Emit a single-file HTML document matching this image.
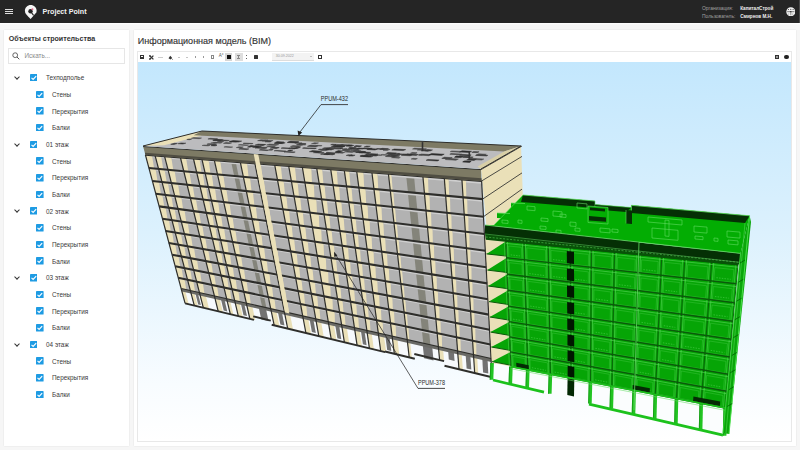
<!DOCTYPE html>
<html><head><meta charset="utf-8">
<style>
*{margin:0;padding:0;box-sizing:border-box}
html,body{width:800px;height:450px;overflow:hidden;background:#f6f6f6;font-family:"Liberation Sans",sans-serif;position:relative}
.hdr{position:absolute;left:0;top:0;width:800px;height:22.8px;background:#252525}
.card{position:absolute;background:#fff;box-shadow:0 0 1.2px rgba(0,0,0,0.13)}
.row{position:absolute;left:0;height:0}
.row .cb{position:absolute;top:-3.7px;width:7.6px;height:7.6px;line-height:0}
.row .lbl{position:absolute;top:-4.4px;font-size:6.4px;color:#3a3a3a;white-space:nowrap;line-height:9px}
.chev{position:absolute;left:14.6px;top:-2.6px;width:4px;height:4px;border-right:1.1px solid #333;border-bottom:1.1px solid #333;transform:rotate(45deg)}
.abs{position:absolute;white-space:nowrap;line-height:1}
</style></head><body>
<div class="abs" style="left:0;top:22.8px;width:800px;height:2px;background:linear-gradient(#fff,#f6f6f6)"></div>
<div class="hdr">
  <div class="abs" style="left:5px;top:8.5px;width:8px;height:1.2px;background:#ddd"></div>
  <div class="abs" style="left:5px;top:10.9px;width:8px;height:1.2px;background:#ddd"></div>
  <div class="abs" style="left:5px;top:13.3px;width:8px;height:1.2px;background:#ddd"></div>
  <svg class="abs" style="left:22px;top:3.2px" width="18" height="18" viewBox="0 0 18 18">
    <path d="M8.7 2.1 C5.5 2.1 2.9 4.6 2.9 7.8 C2.9 10.1 4.3 11.6 5.9 13.3 L8.6 15.9 L14.3 9.6 C14.5 9 14.6 8.4 14.6 7.8 C14.6 4.6 12 2.1 8.7 2.1Z" fill="#f6f6f6"/>
    <circle cx="8.5" cy="8.2" r="2.2" fill="#242424"/>
    <path d="M8.7 8.6 L11.6 12.4" stroke="#242424" stroke-width="1.1"/>
    <circle cx="10.4" cy="6.3" r="1" fill="#e0557a" opacity="0.85"/>
  </svg>
  <div class="abs" style="left:42.5px;top:8.5px;font-size:7.15px;font-weight:bold;color:#f2f2f2">Project Point</div>
  <div class="abs" style="left:702px;top:7.4px;font-size:4.95px;color:#a0a0a0">Организация:</div>
  <div class="abs" style="left:702px;top:14.6px;font-size:4.95px;color:#a0a0a0">Пользователь:</div>
  <div class="abs" style="left:740.2px;top:7.3px;font-size:4.65px;font-weight:bold;color:#f0f0f0">КапиталСтрой</div>
  <div class="abs" style="left:740.2px;top:14.5px;font-size:4.65px;font-weight:bold;color:#f0f0f0">Смирнов М.Н.</div>
  <svg class="abs" style="left:785.8px;top:6.8px" width="9.6" height="9.6" viewBox="0 0 10 10">
    <circle cx="5" cy="5" r="4.7" fill="#f2f2f2"/>
    <circle cx="2.6" cy="2.6" r="0.55" fill="#333"/><circle cx="5" cy="2.4" r="0.6" fill="#333"/><circle cx="7.4" cy="2.6" r="0.55" fill="#333"/>
    <path d="M1.2 4.9H8.8" stroke="#444" stroke-width="0.7"/><circle cx="5" cy="4.9" r="0.7" fill="#222"/>
    <path d="M5 5.5V8.6" stroke="#555" stroke-width="0.7"/>
    <circle cx="2.9" cy="7.2" r="0.5" fill="#555"/><circle cx="7.1" cy="7.2" r="0.5" fill="#555"/>
  </svg>
  <div class="abs" style="left:798.8px;top:0;width:1.2px;height:22.8px;background:#4a4a4a"></div>
</div>
<div class="card" style="left:4px;top:30px;width:125px;height:415.5px"></div>
<div class="abs" style="left:8.75px;top:36px;font-size:7.1px;font-weight:bold;color:#333">Объекты строительства</div>
<div class="abs" style="left:8.3px;top:48px;width:116.4px;height:16.4px;border:1px solid #e6e6e6;background:#fff"></div>
<svg class="abs" style="left:12.4px;top:52px" width="8" height="8" viewBox="0 0 8 8"><circle cx="3.2" cy="3.2" r="2.4" fill="none" stroke="#555" stroke-width="0.9"/><path d="M5 5 L7.3 7.3" stroke="#555" stroke-width="1"/></svg>
<div class="abs" style="left:24.5px;top:53.3px;font-size:6.35px;color:#8a8a8a">Искать...</div>
<div class="row" style="top:77.5px"><span class="chev"></span><span class="cb" style="left:29.5px"><svg width="7.6" height="7.6" viewBox="0 0 8 8"><rect width="8" height="8" rx="0.7" fill="#1e9be3"/><path d="M1.6 4.1 L3.3 5.7 L6.5 2.3" stroke="#fff" stroke-width="1.25" fill="none"/></svg></span><span class="lbl" style="left:46px">Техподполье</span></div>
<div class="row" style="top:94.2px"><span class="cb" style="left:36px"><svg width="7.6" height="7.6" viewBox="0 0 8 8"><rect width="8" height="8" rx="0.7" fill="#1e9be3"/><path d="M1.6 4.1 L3.3 5.7 L6.5 2.3" stroke="#fff" stroke-width="1.25" fill="none"/></svg></span><span class="lbl" style="left:52px">Стены</span></div>
<div class="row" style="top:110.9px"><span class="cb" style="left:36px"><svg width="7.6" height="7.6" viewBox="0 0 8 8"><rect width="8" height="8" rx="0.7" fill="#1e9be3"/><path d="M1.6 4.1 L3.3 5.7 L6.5 2.3" stroke="#fff" stroke-width="1.25" fill="none"/></svg></span><span class="lbl" style="left:52px">Перекрытия</span></div>
<div class="row" style="top:127.5px"><span class="cb" style="left:36px"><svg width="7.6" height="7.6" viewBox="0 0 8 8"><rect width="8" height="8" rx="0.7" fill="#1e9be3"/><path d="M1.6 4.1 L3.3 5.7 L6.5 2.3" stroke="#fff" stroke-width="1.25" fill="none"/></svg></span><span class="lbl" style="left:52px">Балки</span></div>
<div class="row" style="top:144.2px"><span class="chev"></span><span class="cb" style="left:29.5px"><svg width="7.6" height="7.6" viewBox="0 0 8 8"><rect width="8" height="8" rx="0.7" fill="#1e9be3"/><path d="M1.6 4.1 L3.3 5.7 L6.5 2.3" stroke="#fff" stroke-width="1.25" fill="none"/></svg></span><span class="lbl" style="left:46px">01 этаж</span></div>
<div class="row" style="top:160.9px"><span class="cb" style="left:36px"><svg width="7.6" height="7.6" viewBox="0 0 8 8"><rect width="8" height="8" rx="0.7" fill="#1e9be3"/><path d="M1.6 4.1 L3.3 5.7 L6.5 2.3" stroke="#fff" stroke-width="1.25" fill="none"/></svg></span><span class="lbl" style="left:52px">Стены</span></div>
<div class="row" style="top:177.6px"><span class="cb" style="left:36px"><svg width="7.6" height="7.6" viewBox="0 0 8 8"><rect width="8" height="8" rx="0.7" fill="#1e9be3"/><path d="M1.6 4.1 L3.3 5.7 L6.5 2.3" stroke="#fff" stroke-width="1.25" fill="none"/></svg></span><span class="lbl" style="left:52px">Перекрытия</span></div>
<div class="row" style="top:194.3px"><span class="cb" style="left:36px"><svg width="7.6" height="7.6" viewBox="0 0 8 8"><rect width="8" height="8" rx="0.7" fill="#1e9be3"/><path d="M1.6 4.1 L3.3 5.7 L6.5 2.3" stroke="#fff" stroke-width="1.25" fill="none"/></svg></span><span class="lbl" style="left:52px">Балки</span></div>
<div class="row" style="top:210.9px"><span class="chev"></span><span class="cb" style="left:29.5px"><svg width="7.6" height="7.6" viewBox="0 0 8 8"><rect width="8" height="8" rx="0.7" fill="#1e9be3"/><path d="M1.6 4.1 L3.3 5.7 L6.5 2.3" stroke="#fff" stroke-width="1.25" fill="none"/></svg></span><span class="lbl" style="left:46px">02 этаж</span></div>
<div class="row" style="top:227.6px"><span class="cb" style="left:36px"><svg width="7.6" height="7.6" viewBox="0 0 8 8"><rect width="8" height="8" rx="0.7" fill="#1e9be3"/><path d="M1.6 4.1 L3.3 5.7 L6.5 2.3" stroke="#fff" stroke-width="1.25" fill="none"/></svg></span><span class="lbl" style="left:52px">Стены</span></div>
<div class="row" style="top:244.3px"><span class="cb" style="left:36px"><svg width="7.6" height="7.6" viewBox="0 0 8 8"><rect width="8" height="8" rx="0.7" fill="#1e9be3"/><path d="M1.6 4.1 L3.3 5.7 L6.5 2.3" stroke="#fff" stroke-width="1.25" fill="none"/></svg></span><span class="lbl" style="left:52px">Перекрытия</span></div>
<div class="row" style="top:261.0px"><span class="cb" style="left:36px"><svg width="7.6" height="7.6" viewBox="0 0 8 8"><rect width="8" height="8" rx="0.7" fill="#1e9be3"/><path d="M1.6 4.1 L3.3 5.7 L6.5 2.3" stroke="#fff" stroke-width="1.25" fill="none"/></svg></span><span class="lbl" style="left:52px">Балки</span></div>
<div class="row" style="top:277.7px"><span class="chev"></span><span class="cb" style="left:29.5px"><svg width="7.6" height="7.6" viewBox="0 0 8 8"><rect width="8" height="8" rx="0.7" fill="#1e9be3"/><path d="M1.6 4.1 L3.3 5.7 L6.5 2.3" stroke="#fff" stroke-width="1.25" fill="none"/></svg></span><span class="lbl" style="left:46px">03 этаж</span></div>
<div class="row" style="top:294.3px"><span class="cb" style="left:36px"><svg width="7.6" height="7.6" viewBox="0 0 8 8"><rect width="8" height="8" rx="0.7" fill="#1e9be3"/><path d="M1.6 4.1 L3.3 5.7 L6.5 2.3" stroke="#fff" stroke-width="1.25" fill="none"/></svg></span><span class="lbl" style="left:52px">Стены</span></div>
<div class="row" style="top:311.0px"><span class="cb" style="left:36px"><svg width="7.6" height="7.6" viewBox="0 0 8 8"><rect width="8" height="8" rx="0.7" fill="#1e9be3"/><path d="M1.6 4.1 L3.3 5.7 L6.5 2.3" stroke="#fff" stroke-width="1.25" fill="none"/></svg></span><span class="lbl" style="left:52px">Перекрытия</span></div>
<div class="row" style="top:327.7px"><span class="cb" style="left:36px"><svg width="7.6" height="7.6" viewBox="0 0 8 8"><rect width="8" height="8" rx="0.7" fill="#1e9be3"/><path d="M1.6 4.1 L3.3 5.7 L6.5 2.3" stroke="#fff" stroke-width="1.25" fill="none"/></svg></span><span class="lbl" style="left:52px">Балки</span></div>
<div class="row" style="top:344.4px"><span class="chev"></span><span class="cb" style="left:29.5px"><svg width="7.6" height="7.6" viewBox="0 0 8 8"><rect width="8" height="8" rx="0.7" fill="#1e9be3"/><path d="M1.6 4.1 L3.3 5.7 L6.5 2.3" stroke="#fff" stroke-width="1.25" fill="none"/></svg></span><span class="lbl" style="left:46px">04 этаж</span></div>
<div class="row" style="top:361.1px"><span class="cb" style="left:36px"><svg width="7.6" height="7.6" viewBox="0 0 8 8"><rect width="8" height="8" rx="0.7" fill="#1e9be3"/><path d="M1.6 4.1 L3.3 5.7 L6.5 2.3" stroke="#fff" stroke-width="1.25" fill="none"/></svg></span><span class="lbl" style="left:52px">Стены</span></div>
<div class="row" style="top:377.7px"><span class="cb" style="left:36px"><svg width="7.6" height="7.6" viewBox="0 0 8 8"><rect width="8" height="8" rx="0.7" fill="#1e9be3"/><path d="M1.6 4.1 L3.3 5.7 L6.5 2.3" stroke="#fff" stroke-width="1.25" fill="none"/></svg></span><span class="lbl" style="left:52px">Перекрытия</span></div>
<div class="row" style="top:394.4px"><span class="cb" style="left:36px"><svg width="7.6" height="7.6" viewBox="0 0 8 8"><rect width="8" height="8" rx="0.7" fill="#1e9be3"/><path d="M1.6 4.1 L3.3 5.7 L6.5 2.3" stroke="#fff" stroke-width="1.25" fill="none"/></svg></span><span class="lbl" style="left:52px">Балки</span></div>
<div class="card" style="left:133.5px;top:30px;width:662px;height:415.5px"></div>
<div class="abs" style="left:137.8px;top:37.2px;font-size:9.02px;color:#333;-webkit-text-stroke:0.15px #333">Информационная модель (BIM)</div>
<div class="abs" style="left:137px;top:51px;width:654.5px;height:390.5px;border:1px solid #e8e8e8;background:#fff"></div>

<div class="abs" style="left:139.5px;top:55px;width:4.8px;height:3.8px;background:#333"></div>
<div class="abs" style="left:140.6px;top:56.3px;width:2.6px;height:1.1px;background:#fff"></div>
<svg class="abs" style="left:148.8px;top:54.6px" width="5" height="5" viewBox="0 0 5 5"><path d="M0.6 0.6L4.4 4.4M4.4 0.6L0.6 4.4" stroke="#333" stroke-width="1.3"/><circle cx="0.9" cy="0.9" r="0.8" fill="#333"/><circle cx="0.9" cy="4.1" r="0.8" fill="#333"/></svg>
<div class="abs" style="left:158.2px;top:56.6px;width:4.5px;height:0.8px;background:#ccc"></div>
<svg class="abs" style="left:167.8px;top:54.5px" width="5" height="5" viewBox="0 0 5 5"><path d="M0.5 3.2L2.3 0.8L4.2 3L2.6 4.6Z" fill="#333"/><path d="M4 3.8L4.8 4.8" stroke="#333" stroke-width="0.6"/></svg>
<div class="abs" style="left:177.5px;top:56.5px;width:2.5px;height:0.8px;background:#c4c4c4"></div>
<div class="abs" style="left:185.5px;top:56.5px;width:2.5px;height:0.8px;background:#c4c4c4"></div>
<div class="abs" style="left:194.5px;top:55.5px;width:1.2px;height:2.5px;background:#999"></div>
<div class="abs" style="left:202.8px;top:55.5px;width:1.2px;height:2.5px;background:#999"></div>
<div class="abs" style="left:211.4px;top:55px;width:3px;height:3.8px;border:0.7px dashed #888"></div>
<div class="abs" style="left:218.8px;top:53.5px;font-size:4.5px;color:#555">A°</div>
<div class="abs" style="left:225.2px;top:53px;width:6.8px;height:7.8px;background:#d6d6d6"></div>
<div class="abs" style="left:227px;top:55px;width:4px;height:4px;background:#111"></div>
<div class="abs" style="left:235px;top:53px;width:7.9px;height:7.8px;background:#dedede"></div>
<div class="abs" style="left:238.2px;top:55px;width:1px;height:4px;background:#888"></div>
<div class="abs" style="left:237.3px;top:55px;width:2.8px;height:0.7px;background:#888"></div>
<div class="abs" style="left:237.3px;top:58.3px;width:2.8px;height:0.7px;background:#888"></div>
<div class="abs" style="left:246px;top:54.5px;width:1.3px;height:1.3px;background:#666"></div>
<div class="abs" style="left:246px;top:57.8px;width:1.3px;height:1.3px;background:#666"></div>
<div class="abs" style="left:254px;top:55px;width:4.2px;height:3.8px;background:#333;border-radius:0.6px"></div>
<div class="abs" style="left:272.2px;top:52.5px;width:41.6px;height:8.7px;background:#f3f3f3;border-bottom:0.6px solid #ddd"></div>
<div class="abs" style="left:275.7px;top:54.8px;font-size:3.6px;color:#999">30.09.2022</div>
<div class="abs" style="left:310.4px;top:55.8px;width:0;height:0;border-left:1.2px solid transparent;border-right:1.2px solid transparent;border-top:1.4px solid #888"></div>
<div class="abs" style="left:317.8px;top:54.8px;width:4.2px;height:4.2px;border:0.9px solid #333;border-top-width:1.3px"></div>
<div class="abs" style="left:775px;top:55px;width:4px;height:4px;background:#333"></div>
<div class="abs" style="left:776.2px;top:56.2px;width:1.6px;height:1.6px;background:#999"></div>
<div class="abs" style="left:784px;top:54.8px;width:4.5px;height:4.5px;background:#222;border-radius:50%"></div>

<div class="abs" style="left:138px;top:62px;width:652.5px;height:378.5px;background:linear-gradient(180deg,#c3e7fd 0%,#dcf1fd 45%,#f8fcff 85%,#ffffff 100%)"></div>
<svg class="abs" style="left:138px;top:62px" width="652.5" height="378.5" viewBox="138 62 652.5 378.5">
<polygon points="481.0,169.0 521.0,146.0 523.0,200.0 487.0,232.0" fill="#eae0b8"/>
<line x1="481.0" y1="169.6" x2="522.0" y2="146.0" stroke="#4a4a44" stroke-width="1.00"/>
<line x1="481.6" y1="181.0" x2="522.0" y2="156.4" stroke="#4a4a44" stroke-width="1.00"/>
<line x1="482.6" y1="199.1" x2="522.0" y2="172.9" stroke="#4a4a44" stroke-width="1.00"/>
<line x1="483.5" y1="216.7" x2="522.0" y2="189.1" stroke="#4a4a44" stroke-width="1.00"/>
<line x1="484.4" y1="234.0" x2="522.0" y2="205.0" stroke="#4a4a44" stroke-width="1.00"/>
<polygon points="484.4,234.0 490.0,237.0 497.0,380.0 492.0,377.2" fill="#eae0b8"/>
<polygon points="145.4,154.8 481.6,181.0 491.0,358.9 181.3,289.0" fill="#b2b2b2"/>
<polygon points="145.4,154.8 152.0,155.3 154.1,168.5 148.9,168.0" fill="#eae0b8"/>
<polygon points="152.0,155.3 155.1,155.6 155.6,157.6 152.5,157.3" fill="#cfcfcf"/>
<polygon points="148.9,168.0 155.5,168.6 157.6,181.6 152.4,181.0" fill="#eae0b8"/>
<polygon points="155.5,168.6 158.6,168.9 159.1,170.9 156.0,170.6" fill="#cfcfcf"/>
<polygon points="152.4,181.0 158.9,181.8 161.0,194.5 155.8,193.8" fill="#eae0b8"/>
<polygon points="158.9,181.8 162.0,182.1 162.5,184.0 159.4,183.7" fill="#cfcfcf"/>
<polygon points="155.8,193.8 162.3,194.6 164.3,207.1 159.2,206.4" fill="#eae0b8"/>
<polygon points="162.3,194.6 165.4,195.0 165.9,196.9 162.8,196.6" fill="#cfcfcf"/>
<polygon points="159.2,206.4 165.6,207.3 167.6,219.6 162.5,218.8" fill="#eae0b8"/>
<polygon points="165.6,207.3 168.7,207.7 169.2,209.6 166.1,209.2" fill="#cfcfcf"/>
<polygon points="162.5,218.8 168.9,219.8 170.9,231.8 165.7,231.0" fill="#eae0b8"/>
<polygon points="168.9,219.8 172.0,220.2 172.5,222.1 169.4,221.6" fill="#cfcfcf"/>
<polygon points="165.7,231.0 172.2,232.0 174.0,243.9 168.9,243.0" fill="#eae0b8"/>
<polygon points="172.2,232.0 175.2,232.5 175.7,234.4 172.6,233.8" fill="#cfcfcf"/>
<polygon points="168.9,243.0 175.3,244.1 177.2,255.7 172.1,254.7" fill="#eae0b8"/>
<polygon points="175.3,244.1 178.4,244.6 178.8,246.4 175.8,245.9" fill="#cfcfcf"/>
<polygon points="172.1,254.7 178.5,255.9 180.3,267.4 175.2,266.3" fill="#eae0b8"/>
<polygon points="178.5,255.9 181.5,256.5 181.9,258.3 178.9,257.7" fill="#cfcfcf"/>
<polygon points="175.2,266.3 181.5,267.6 183.3,278.8 178.2,277.8" fill="#eae0b8"/>
<polygon points="181.5,267.6 184.5,268.2 185.0,270.0 182.0,269.4" fill="#cfcfcf"/>
<polygon points="178.2,277.8 184.6,279.1 186.3,290.1 181.3,289.0" fill="#eae0b8"/>
<polygon points="184.6,279.1 187.6,279.8 188.0,281.5 185.0,280.8" fill="#cfcfcf"/>
<polygon points="155.1,155.6 161.1,156.0 163.3,169.4 158.6,168.9" fill="#eae0b8"/>
<polygon points="161.1,156.0 164.6,156.3 165.1,158.3 161.6,158.1" fill="#cfcfcf"/>
<polygon points="158.6,168.9 164.5,169.5 166.8,182.6 162.0,182.1" fill="#eae0b8"/>
<polygon points="164.5,169.5 168.1,169.8 168.6,171.8 165.1,171.5" fill="#cfcfcf"/>
<polygon points="162.0,182.1 167.9,182.7 170.1,195.6 165.4,195.0" fill="#eae0b8"/>
<polygon points="167.9,182.7 171.5,183.1 172.0,185.1 168.5,184.7" fill="#cfcfcf"/>
<polygon points="165.4,195.0 171.3,195.7 173.4,208.4 168.7,207.7" fill="#eae0b8"/>
<polygon points="171.3,195.7 174.8,196.2 175.3,198.1 171.8,197.7" fill="#cfcfcf"/>
<polygon points="168.7,207.7 174.6,208.5 176.7,220.9 172.0,220.2" fill="#eae0b8"/>
<polygon points="174.6,208.5 178.1,209.0 178.6,210.9 175.1,210.4" fill="#cfcfcf"/>
<polygon points="172.0,220.2 177.8,221.1 179.9,233.3 175.2,232.5" fill="#eae0b8"/>
<polygon points="177.8,221.1 181.3,221.6 181.8,223.5 178.3,223.0" fill="#cfcfcf"/>
<polygon points="175.2,232.5 181.0,233.5 183.0,245.4 178.4,244.6" fill="#eae0b8"/>
<polygon points="181.0,233.5 184.5,234.0 184.9,235.9 181.5,235.3" fill="#cfcfcf"/>
<polygon points="178.4,244.6 184.2,245.6 186.1,257.4 181.5,256.5" fill="#eae0b8"/>
<polygon points="184.2,245.6 187.6,246.2 188.1,248.1 184.6,247.4" fill="#cfcfcf"/>
<polygon points="181.5,256.5 187.2,257.6 189.1,269.2 184.5,268.2" fill="#eae0b8"/>
<polygon points="187.2,257.6 190.7,258.3 191.1,260.0 187.7,259.4" fill="#cfcfcf"/>
<polygon points="184.5,268.2 190.3,269.4 192.1,280.7 187.6,279.8" fill="#eae0b8"/>
<polygon points="190.3,269.4 193.7,270.1 194.1,271.8 190.7,271.1" fill="#cfcfcf"/>
<polygon points="187.6,279.8 193.3,281.0 195.1,292.1 190.5,291.1" fill="#eae0b8"/>
<polygon points="193.3,281.0 196.6,281.7 197.1,283.4 193.7,282.7" fill="#cfcfcf"/>
<polygon points="164.6,156.3 171.2,156.8 173.3,170.3 168.1,169.8" fill="#eae0b8"/>
<polygon points="171.2,156.8 180.4,157.5 181.0,159.6 171.7,158.9" fill="#cfcfcf"/>
<polygon points="168.1,169.8 174.6,170.4 176.7,183.7 171.5,183.1" fill="#eae0b8"/>
<polygon points="174.6,170.4 183.8,171.3 184.3,173.3 175.1,172.4" fill="#cfcfcf"/>
<polygon points="171.5,183.1 178.0,183.8 180.0,196.8 174.8,196.2" fill="#eae0b8"/>
<polygon points="178.0,183.8 187.1,184.8 187.6,186.8 178.5,185.8" fill="#cfcfcf"/>
<polygon points="174.8,196.2 181.3,197.0 183.2,209.7 178.1,209.0" fill="#eae0b8"/>
<polygon points="181.3,197.0 190.4,198.1 190.9,200.0 181.8,198.9" fill="#cfcfcf"/>
<polygon points="178.1,209.0 184.5,209.9 186.4,222.4 181.3,221.6" fill="#eae0b8"/>
<polygon points="184.5,209.9 193.6,211.1 194.1,213.1 185.0,211.8" fill="#cfcfcf"/>
<polygon points="181.3,221.6 187.7,222.6 189.6,234.9 184.5,234.0" fill="#eae0b8"/>
<polygon points="187.7,222.6 196.7,223.9 197.2,225.8 188.2,224.5" fill="#cfcfcf"/>
<polygon points="184.5,234.0 190.9,235.1 192.7,247.1 187.6,246.2" fill="#eae0b8"/>
<polygon points="190.9,235.1 199.8,236.5 200.3,238.4 191.3,236.9" fill="#cfcfcf"/>
<polygon points="187.6,246.2 194.0,247.4 195.7,259.2 190.7,258.3" fill="#eae0b8"/>
<polygon points="194.0,247.4 202.9,248.9 203.3,250.8 194.4,249.2" fill="#cfcfcf"/>
<polygon points="190.7,258.3 197.0,259.5 198.7,271.1 193.7,270.1" fill="#eae0b8"/>
<polygon points="197.0,259.5 205.9,261.1 206.3,262.9 197.4,261.2" fill="#cfcfcf"/>
<polygon points="193.7,270.1 200.0,271.3 201.7,282.8 196.6,281.7" fill="#eae0b8"/>
<polygon points="200.0,271.3 208.8,273.1 209.2,274.9 200.4,273.1" fill="#cfcfcf"/>
<polygon points="196.6,281.7 202.9,283.0 204.5,294.3 199.6,293.1" fill="#eae0b8"/>
<polygon points="202.9,283.0 211.7,284.9 212.1,286.7 203.3,284.8" fill="#cfcfcf"/>
<polygon points="180.4,157.5 186.1,158.0 188.3,171.7 183.8,171.3" fill="#eae0b8"/>
<polygon points="186.1,158.0 193.4,158.5 193.9,160.6 186.6,160.1" fill="#cfcfcf"/>
<polygon points="183.8,171.3 189.4,171.8 191.6,185.3 187.1,184.8" fill="#eae0b8"/>
<polygon points="189.4,171.8 196.7,172.5 197.2,174.5 189.9,173.9" fill="#cfcfcf"/>
<polygon points="187.1,184.8 192.7,185.4 194.8,198.6 190.4,198.1" fill="#eae0b8"/>
<polygon points="192.7,185.4 199.9,186.2 200.4,188.2 193.2,187.4" fill="#cfcfcf"/>
<polygon points="190.4,198.1 195.9,198.7 198.0,211.7 193.6,211.1" fill="#eae0b8"/>
<polygon points="195.9,198.7 203.1,199.6 203.6,201.6 196.4,200.7" fill="#cfcfcf"/>
<polygon points="193.6,211.1 199.1,211.9 201.1,224.6 196.7,223.9" fill="#eae0b8"/>
<polygon points="199.1,211.9 206.2,212.8 206.7,214.8 199.6,213.8" fill="#cfcfcf"/>
<polygon points="196.7,223.9 202.2,224.8 204.2,237.3 199.8,236.5" fill="#eae0b8"/>
<polygon points="202.2,224.8 209.3,225.8 209.8,227.8 202.7,226.7" fill="#cfcfcf"/>
<polygon points="199.8,236.5 205.3,237.4 207.2,249.7 202.9,248.9" fill="#eae0b8"/>
<polygon points="205.3,237.4 212.4,238.6 212.8,240.5 205.8,239.3" fill="#cfcfcf"/>
<polygon points="202.9,248.9 208.3,249.9 210.2,261.9 205.9,261.1" fill="#eae0b8"/>
<polygon points="208.3,249.9 215.3,251.1 215.8,253.0 208.8,251.8" fill="#cfcfcf"/>
<polygon points="205.9,261.1 211.3,262.2 213.1,274.0 208.8,273.1" fill="#eae0b8"/>
<polygon points="211.3,262.2 218.3,263.5 218.7,265.3 211.7,264.0" fill="#cfcfcf"/>
<polygon points="208.8,273.1 214.2,274.2 216.0,285.8 211.7,284.9" fill="#eae0b8"/>
<polygon points="214.2,274.2 221.1,275.6 221.6,277.4 214.6,276.0" fill="#cfcfcf"/>
<polygon points="211.7,284.9 217.1,286.1 218.8,297.5 214.6,296.5" fill="#eae0b8"/>
<polygon points="217.1,286.1 224.0,287.5 224.4,289.3 217.5,287.8" fill="#cfcfcf"/>
<polygon points="193.4,158.5 199.6,159.0 201.6,172.9 196.7,172.5" fill="#eae0b8"/>
<polygon points="199.6,159.0 201.9,159.2 202.4,161.3 200.1,161.1" fill="#cfcfcf"/>
<polygon points="196.7,172.5 202.8,173.1 204.8,186.7 199.9,186.2" fill="#eae0b8"/>
<polygon points="202.8,173.1 205.2,173.3 205.6,175.4 203.3,175.1" fill="#cfcfcf"/>
<polygon points="199.9,186.2 206.1,186.8 208.0,200.2 203.1,199.6" fill="#eae0b8"/>
<polygon points="206.1,186.8 208.4,187.1 208.8,189.1 206.5,188.9" fill="#cfcfcf"/>
<polygon points="203.1,199.6 209.2,200.4 211.1,213.5 206.2,212.8" fill="#eae0b8"/>
<polygon points="209.2,200.4 211.5,200.6 212.0,202.7 209.7,202.4" fill="#cfcfcf"/>
<polygon points="206.2,212.8 212.3,213.7 214.2,226.5 209.3,225.8" fill="#eae0b8"/>
<polygon points="212.3,213.7 214.6,214.0 215.1,216.0 212.8,215.6" fill="#cfcfcf"/>
<polygon points="209.3,225.8 215.4,226.7 217.2,239.4 212.4,238.6" fill="#eae0b8"/>
<polygon points="215.4,226.7 217.6,227.1 218.1,229.0 215.8,228.7" fill="#cfcfcf"/>
<polygon points="212.4,238.6 218.4,239.6 220.1,252.0 215.3,251.1" fill="#eae0b8"/>
<polygon points="218.4,239.6 220.6,239.9 221.1,241.8 218.8,241.5" fill="#cfcfcf"/>
<polygon points="215.3,251.1 221.3,252.2 223.0,264.4 218.3,263.5" fill="#eae0b8"/>
<polygon points="221.3,252.2 223.5,252.6 224.0,254.5 221.8,254.1" fill="#cfcfcf"/>
<polygon points="218.3,263.5 224.2,264.6 225.9,276.6 221.1,275.6" fill="#eae0b8"/>
<polygon points="224.2,264.6 226.4,265.0 226.9,266.9 224.6,266.4" fill="#cfcfcf"/>
<polygon points="221.1,275.6 227.1,276.8 228.7,288.5 224.0,287.5" fill="#eae0b8"/>
<polygon points="227.1,276.8 229.3,277.2 229.7,279.1 227.5,278.6" fill="#cfcfcf"/>
<polygon points="224.0,287.5 229.9,288.8 231.4,300.3 226.8,299.3" fill="#eae0b8"/>
<polygon points="229.9,288.8 232.1,289.3 232.5,291.0 230.3,290.6" fill="#cfcfcf"/>
<polygon points="201.9,159.2 208.6,159.7 210.5,173.8 205.2,173.3" fill="#eae0b8"/>
<polygon points="208.6,159.7 214.3,160.2 214.8,162.3 209.0,161.9" fill="#cfcfcf"/>
<polygon points="205.2,173.3 211.8,173.9 213.6,187.6 208.4,187.1" fill="#eae0b8"/>
<polygon points="211.8,173.9 217.5,174.4 218.0,176.5 212.3,176.0" fill="#cfcfcf"/>
<polygon points="208.4,187.1 215.0,187.8 216.7,201.3 211.5,200.6" fill="#eae0b8"/>
<polygon points="215.0,187.8 220.6,188.4 221.1,190.5 215.4,189.9" fill="#cfcfcf"/>
<polygon points="211.5,200.6 218.1,201.4 219.8,214.7 214.6,214.0" fill="#eae0b8"/>
<polygon points="218.1,201.4 223.7,202.1 224.2,204.2 218.5,203.5" fill="#cfcfcf"/>
<polygon points="214.6,214.0 221.1,214.9 222.8,227.8 217.6,227.1" fill="#eae0b8"/>
<polygon points="221.1,214.9 226.7,215.6 227.2,217.6 221.6,216.9" fill="#cfcfcf"/>
<polygon points="217.6,227.1 224.1,228.0 225.8,240.8 220.6,239.9" fill="#eae0b8"/>
<polygon points="224.1,228.0 229.7,228.9 230.2,230.8 224.6,230.0" fill="#cfcfcf"/>
<polygon points="220.6,239.9 227.1,241.0 228.7,253.5 223.5,252.6" fill="#eae0b8"/>
<polygon points="227.1,241.0 232.6,241.9 233.1,243.8 227.5,242.9" fill="#cfcfcf"/>
<polygon points="223.5,252.6 230.0,253.7 231.5,266.0 226.4,265.0" fill="#eae0b8"/>
<polygon points="230.0,253.7 235.5,254.7 235.9,256.6 230.4,255.6" fill="#cfcfcf"/>
<polygon points="226.4,265.0 232.8,266.2 234.3,278.3 229.3,277.2" fill="#eae0b8"/>
<polygon points="232.8,266.2 238.3,267.3 238.7,269.1 233.2,268.1" fill="#cfcfcf"/>
<polygon points="229.3,277.2 235.6,278.5 237.1,290.3 232.1,289.3" fill="#eae0b8"/>
<polygon points="235.6,278.5 241.1,279.6 241.5,281.5 236.0,280.3" fill="#cfcfcf"/>
<polygon points="232.1,289.3 238.4,290.6 239.8,302.2 234.8,301.1" fill="#eae0b8"/>
<polygon points="238.4,290.6 243.8,291.8 244.2,293.6 238.8,292.4" fill="#cfcfcf"/>
<polygon points="214.3,160.2 220.2,160.6 222.2,174.8 217.5,174.4" fill="#eae0b8"/>
<polygon points="220.2,160.6 240.3,162.2 240.7,164.4 220.6,162.8" fill="#cfcfcf"/>
<polygon points="217.5,174.4 223.3,175.0 225.3,188.9 220.6,188.4" fill="#eae0b8"/>
<polygon points="223.3,175.0 243.3,176.8 243.8,179.0 223.8,177.1" fill="#cfcfcf"/>
<polygon points="220.6,188.4 226.4,189.0 228.3,202.7 223.7,202.1" fill="#eae0b8"/>
<polygon points="226.4,189.0 246.3,191.2 246.7,193.3 226.9,191.1" fill="#cfcfcf"/>
<polygon points="223.7,202.1 229.5,202.8 231.3,216.3 226.7,215.6" fill="#eae0b8"/>
<polygon points="229.5,202.8 249.2,205.3 249.7,207.3 229.9,204.9" fill="#cfcfcf"/>
<polygon points="226.7,215.6 232.5,216.4 234.3,229.6 229.7,228.9" fill="#eae0b8"/>
<polygon points="232.5,216.4 252.1,219.1 252.5,221.1 232.9,218.4" fill="#cfcfcf"/>
<polygon points="229.7,228.9 235.4,229.7 237.1,242.6 232.6,241.9" fill="#eae0b8"/>
<polygon points="235.4,229.7 254.9,232.7 255.3,234.7 235.8,231.7" fill="#cfcfcf"/>
<polygon points="232.6,241.9 238.3,242.8 240.0,255.5 235.5,254.7" fill="#eae0b8"/>
<polygon points="238.3,242.8 257.7,246.0 258.1,248.0 238.7,244.8" fill="#cfcfcf"/>
<polygon points="235.5,254.7 241.1,255.7 242.8,268.1 238.3,267.3" fill="#eae0b8"/>
<polygon points="241.1,255.7 260.4,259.1 260.8,261.0 241.5,257.6" fill="#cfcfcf"/>
<polygon points="238.3,267.3 243.9,268.3 245.5,280.5 241.1,279.6" fill="#eae0b8"/>
<polygon points="243.9,268.3 263.1,271.9 263.5,273.9 244.3,270.2" fill="#cfcfcf"/>
<polygon points="241.1,279.6 246.6,280.7 248.2,292.7 243.8,291.8" fill="#eae0b8"/>
<polygon points="246.6,280.7 265.7,284.6 266.1,286.5 247.0,282.6" fill="#cfcfcf"/>
<polygon points="243.8,291.8 249.3,293.0 250.9,304.7 246.5,303.7" fill="#eae0b8"/>
<polygon points="249.3,293.0 268.3,297.0 268.7,298.8 249.7,294.8" fill="#cfcfcf"/>
<polygon points="240.3,162.2 247.0,162.7 248.6,177.3 243.3,176.8" fill="#eae0b8"/>
<polygon points="247.0,162.7 254.9,163.3 255.4,165.6 247.4,164.9" fill="#cfcfcf"/>
<polygon points="243.3,176.8 250.0,177.4 251.6,191.7 246.3,191.2" fill="#eae0b8"/>
<polygon points="250.0,177.4 257.9,178.2 258.3,180.4 250.4,179.6" fill="#cfcfcf"/>
<polygon points="246.3,191.2 252.9,191.9 254.5,205.9 249.2,205.3" fill="#eae0b8"/>
<polygon points="252.9,191.9 260.7,192.7 261.2,194.9 253.3,194.0" fill="#cfcfcf"/>
<polygon points="249.2,205.3 255.8,206.1 257.3,219.8 252.1,219.1" fill="#eae0b8"/>
<polygon points="255.8,206.1 263.6,207.0 264.0,209.1 256.2,208.2" fill="#cfcfcf"/>
<polygon points="252.1,219.1 258.6,220.0 260.1,233.4 254.9,232.7" fill="#eae0b8"/>
<polygon points="258.6,220.0 266.4,221.0 266.8,223.1 259.0,222.0" fill="#cfcfcf"/>
<polygon points="254.9,232.7 261.4,233.6 262.8,246.8 257.7,246.0" fill="#eae0b8"/>
<polygon points="261.4,233.6 269.1,234.8 269.5,236.8 261.8,235.7" fill="#cfcfcf"/>
<polygon points="257.7,246.0 264.1,247.0 265.5,260.0 260.4,259.1" fill="#eae0b8"/>
<polygon points="264.1,247.0 271.8,248.3 272.2,250.3 264.5,249.0" fill="#cfcfcf"/>
<polygon points="260.4,259.1 266.8,260.2 268.1,272.9 263.1,271.9" fill="#eae0b8"/>
<polygon points="266.8,260.2 274.4,261.6 274.8,263.5 267.2,262.2" fill="#cfcfcf"/>
<polygon points="263.1,271.9 269.4,273.1 270.7,285.6 265.7,284.6" fill="#eae0b8"/>
<polygon points="269.4,273.1 277.0,274.6 277.4,276.5 269.8,275.1" fill="#cfcfcf"/>
<polygon points="265.7,284.6 272.0,285.9 273.3,298.1 268.3,297.0" fill="#eae0b8"/>
<polygon points="272.0,285.9 279.5,287.4 279.9,289.3 272.4,287.7" fill="#cfcfcf"/>
<polygon points="268.3,297.0 274.5,298.3 275.8,310.3 270.8,309.2" fill="#eae0b8"/>
<polygon points="274.5,298.3 282.0,299.9 282.4,301.8 274.9,300.2" fill="#cfcfcf"/>
<polygon points="254.9,163.3 260.8,163.8 262.5,178.6 257.9,178.2" fill="#eae0b8"/>
<polygon points="260.8,163.8 274.7,164.9 275.1,167.2 261.2,166.0" fill="#cfcfcf"/>
<polygon points="257.9,178.2 263.7,178.7 265.4,193.2 260.7,192.7" fill="#eae0b8"/>
<polygon points="263.7,178.7 277.5,180.0 277.9,182.2 264.1,180.9" fill="#cfcfcf"/>
<polygon points="260.7,192.7 266.5,193.3 268.2,207.6 263.6,207.0" fill="#eae0b8"/>
<polygon points="266.5,193.3 280.3,194.8 280.7,197.0 266.9,195.5" fill="#cfcfcf"/>
<polygon points="263.6,207.0 269.3,207.7 270.9,221.6 266.4,221.0" fill="#eae0b8"/>
<polygon points="269.3,207.7 283.0,209.4 283.4,211.5 269.7,209.8" fill="#cfcfcf"/>
<polygon points="266.4,221.0 272.1,221.8 273.6,235.5 269.1,234.8" fill="#eae0b8"/>
<polygon points="272.1,221.8 285.6,223.6 286.0,225.8 272.5,223.9" fill="#cfcfcf"/>
<polygon points="269.1,234.8 274.8,235.6 276.3,249.0 271.8,248.3" fill="#eae0b8"/>
<polygon points="274.8,235.6 288.2,237.6 288.6,239.7 275.2,237.7" fill="#cfcfcf"/>
<polygon points="271.8,248.3 277.4,249.2 278.9,262.3 274.4,261.6" fill="#eae0b8"/>
<polygon points="277.4,249.2 290.8,251.4 291.2,253.4 277.8,251.2" fill="#cfcfcf"/>
<polygon points="274.4,261.6 280.0,262.5 281.4,275.4 277.0,274.6" fill="#eae0b8"/>
<polygon points="280.0,262.5 293.3,264.9 293.7,266.9 280.4,264.5" fill="#cfcfcf"/>
<polygon points="277.0,274.6 282.5,275.6 283.9,288.3 279.5,287.4" fill="#eae0b8"/>
<polygon points="282.5,275.6 295.7,278.1 296.1,280.1 282.9,277.6" fill="#cfcfcf"/>
<polygon points="279.5,287.4 285.0,288.5 286.4,300.9 282.0,299.9" fill="#eae0b8"/>
<polygon points="285.0,288.5 298.2,291.1 298.5,293.1 285.4,290.4" fill="#cfcfcf"/>
<polygon points="282.0,299.9 287.5,301.1 288.8,313.3 284.5,312.3" fill="#eae0b8"/>
<polygon points="287.5,301.1 300.5,303.9 300.9,305.8 287.9,303.0" fill="#cfcfcf"/>
<polygon points="274.7,164.9 280.8,165.4 282.4,180.5 277.5,180.0" fill="#eae0b8"/>
<polygon points="280.8,165.4 288.7,166.0 289.2,168.3 281.2,167.7" fill="#cfcfcf"/>
<polygon points="277.5,180.0 283.6,180.6 285.1,195.4 280.3,194.8" fill="#eae0b8"/>
<polygon points="283.6,180.6 291.5,181.3 291.9,183.6 284.0,182.8" fill="#cfcfcf"/>
<polygon points="280.3,194.8 286.3,195.5 287.8,210.0 283.0,209.4" fill="#eae0b8"/>
<polygon points="286.3,195.5 294.1,196.3 294.5,198.6 286.7,197.7" fill="#cfcfcf"/>
<polygon points="283.0,209.4 289.0,210.1 290.4,224.3 285.6,223.6" fill="#eae0b8"/>
<polygon points="289.0,210.1 296.7,211.1 297.1,213.2 289.4,212.3" fill="#cfcfcf"/>
<polygon points="285.6,223.6 291.6,224.5 293.0,238.4 288.2,237.6" fill="#eae0b8"/>
<polygon points="291.6,224.5 299.3,225.5 299.7,227.7 292.0,226.6" fill="#cfcfcf"/>
<polygon points="288.2,237.6 294.1,238.5 295.5,252.2 290.8,251.4" fill="#eae0b8"/>
<polygon points="294.1,238.5 301.8,239.7 302.2,241.8 294.5,240.6" fill="#cfcfcf"/>
<polygon points="290.8,251.4 296.7,252.4 297.9,265.7 293.3,264.9" fill="#eae0b8"/>
<polygon points="296.7,252.4 304.2,253.6 304.6,255.7 297.0,254.4" fill="#cfcfcf"/>
<polygon points="293.3,264.9 299.1,265.9 300.4,279.0 295.7,278.1" fill="#eae0b8"/>
<polygon points="299.1,265.9 306.7,267.2 307.0,269.3 299.5,267.9" fill="#cfcfcf"/>
<polygon points="295.7,278.1 301.5,279.2 302.8,292.1 298.2,291.1" fill="#eae0b8"/>
<polygon points="301.5,279.2 309.0,280.6 309.4,282.6 301.9,281.2" fill="#cfcfcf"/>
<polygon points="298.2,291.1 303.9,292.3 305.1,304.9 300.5,303.9" fill="#eae0b8"/>
<polygon points="303.9,292.3 311.4,293.8 311.7,295.7 304.3,294.2" fill="#cfcfcf"/>
<polygon points="300.5,303.9 306.3,305.1 307.4,317.5 302.9,316.4" fill="#eae0b8"/>
<polygon points="306.3,305.1 313.6,306.7 314.0,308.6 306.6,307.0" fill="#cfcfcf"/>
<polygon points="288.7,166.0 294.9,166.5 296.4,181.8 291.5,181.3" fill="#eae0b8"/>
<polygon points="294.9,166.5 302.3,167.0 302.7,169.4 295.3,168.8" fill="#cfcfcf"/>
<polygon points="291.5,181.3 297.6,181.9 299.0,196.8 294.1,196.3" fill="#eae0b8"/>
<polygon points="297.6,181.9 304.9,182.5 305.3,184.8 298.0,184.2" fill="#cfcfcf"/>
<polygon points="294.1,196.3 300.2,197.0 301.6,211.6 296.7,211.1" fill="#eae0b8"/>
<polygon points="300.2,197.0 307.5,197.8 307.8,200.0 300.6,199.2" fill="#cfcfcf"/>
<polygon points="296.7,211.1 302.8,211.8 304.1,226.2 299.3,225.5" fill="#eae0b8"/>
<polygon points="302.8,211.8 310.0,212.7 310.3,214.9 303.2,214.0" fill="#cfcfcf"/>
<polygon points="299.3,225.5 305.3,226.3 306.6,240.4 301.8,239.7" fill="#eae0b8"/>
<polygon points="305.3,226.3 312.4,227.3 312.8,229.5 305.7,228.5" fill="#cfcfcf"/>
<polygon points="301.8,239.7 307.7,240.6 309.0,254.4 304.2,253.6" fill="#eae0b8"/>
<polygon points="307.7,240.6 314.8,241.6 315.2,243.8 308.1,242.7" fill="#cfcfcf"/>
<polygon points="304.2,253.6 310.2,254.6 311.4,268.1 306.7,267.2" fill="#eae0b8"/>
<polygon points="310.2,254.6 317.2,255.7 317.6,257.8 310.5,256.6" fill="#cfcfcf"/>
<polygon points="306.7,267.2 312.5,268.3 313.7,281.5 309.0,280.6" fill="#eae0b8"/>
<polygon points="312.5,268.3 319.5,269.5 319.9,271.6 312.9,270.3" fill="#cfcfcf"/>
<polygon points="309.0,280.6 314.9,281.7 316.0,294.7 311.4,293.8" fill="#eae0b8"/>
<polygon points="314.9,281.7 321.8,283.1 322.1,285.1 315.2,283.7" fill="#cfcfcf"/>
<polygon points="311.4,293.8 317.2,295.0 318.2,307.7 313.6,306.7" fill="#eae0b8"/>
<polygon points="317.2,295.0 324.0,296.3 324.4,298.3 317.5,296.9" fill="#cfcfcf"/>
<polygon points="313.6,306.7 319.4,307.9 320.5,320.4 315.9,319.4" fill="#eae0b8"/>
<polygon points="319.4,307.9 326.2,309.4 326.6,311.3 319.7,309.9" fill="#cfcfcf"/>
<polygon points="302.3,167.0 311.3,167.7 312.0,183.2 304.9,182.5" fill="#eae0b8"/>
<polygon points="311.3,167.7 316.7,168.1 317.0,170.5 311.7,170.1" fill="#cfcfcf"/>
<polygon points="304.9,182.5 313.8,183.4 314.5,198.5 307.5,197.8" fill="#eae0b8"/>
<polygon points="313.8,183.4 319.2,183.9 319.5,186.2 314.2,185.7" fill="#cfcfcf"/>
<polygon points="307.5,197.8 316.3,198.7 317.0,213.5 310.0,212.7" fill="#eae0b8"/>
<polygon points="316.3,198.7 321.6,199.3 322.0,201.6 316.7,201.0" fill="#cfcfcf"/>
<polygon points="310.0,212.7 318.8,213.8 319.4,228.2 312.4,227.3" fill="#eae0b8"/>
<polygon points="318.8,213.8 324.0,214.4 324.4,216.6 319.1,216.0" fill="#cfcfcf"/>
<polygon points="312.4,227.3 321.2,228.5 321.8,242.7 314.8,241.6" fill="#eae0b8"/>
<polygon points="321.2,228.5 326.4,229.2 326.7,231.4 321.5,230.7" fill="#cfcfcf"/>
<polygon points="314.8,241.6 323.5,242.9 324.1,256.8 317.2,255.7" fill="#eae0b8"/>
<polygon points="323.5,242.9 328.7,243.7 329.0,245.9 323.9,245.1" fill="#cfcfcf"/>
<polygon points="317.2,255.7 325.8,257.1 326.4,270.7 319.5,269.5" fill="#eae0b8"/>
<polygon points="325.8,257.1 330.9,257.9 331.3,260.1 326.2,259.2" fill="#cfcfcf"/>
<polygon points="319.5,269.5 328.1,271.0 328.6,284.3 321.8,283.1" fill="#eae0b8"/>
<polygon points="328.1,271.0 333.2,271.9 333.5,274.0 328.4,273.1" fill="#cfcfcf"/>
<polygon points="321.8,283.1 330.3,284.7 330.8,297.7 324.0,296.3" fill="#eae0b8"/>
<polygon points="330.3,284.7 335.3,285.6 335.7,287.6 330.6,286.7" fill="#cfcfcf"/>
<polygon points="324.0,296.3 332.5,298.0 332.9,310.8 326.2,309.4" fill="#eae0b8"/>
<polygon points="332.5,298.0 337.5,299.1 337.8,301.0 332.8,300.0" fill="#cfcfcf"/>
<polygon points="326.2,309.4 334.6,311.2 335.0,323.7 328.4,322.2" fill="#eae0b8"/>
<polygon points="334.6,311.2 339.6,312.2 339.9,314.2 334.9,313.1" fill="#cfcfcf"/>
<polygon points="316.7,168.1 322.1,168.6 323.5,184.3 319.2,183.9" fill="#eae0b8"/>
<polygon points="322.1,168.6 330.7,169.2 331.0,171.7 322.5,171.0" fill="#cfcfcf"/>
<polygon points="319.2,183.9 324.5,184.4 325.9,199.7 321.6,199.3" fill="#eae0b8"/>
<polygon points="324.5,184.4 333.1,185.2 333.4,187.5 324.9,186.7" fill="#cfcfcf"/>
<polygon points="321.6,199.3 327.0,199.9 328.2,214.9 324.0,214.4" fill="#eae0b8"/>
<polygon points="327.0,199.9 335.4,200.8 335.8,203.1 327.3,202.2" fill="#cfcfcf"/>
<polygon points="324.0,214.4 329.3,215.0 330.6,229.8 326.4,229.2" fill="#eae0b8"/>
<polygon points="329.3,215.0 337.7,216.1 338.1,218.3 329.7,217.3" fill="#cfcfcf"/>
<polygon points="326.4,229.2 331.6,229.9 332.9,244.3 328.7,243.7" fill="#eae0b8"/>
<polygon points="331.6,229.9 340.0,231.0 340.3,233.3 332.0,232.1" fill="#cfcfcf"/>
<polygon points="328.7,243.7 333.9,244.5 335.1,258.6 330.9,257.9" fill="#eae0b8"/>
<polygon points="333.9,244.5 342.2,245.7 342.5,247.9 334.2,246.7" fill="#cfcfcf"/>
<polygon points="330.9,257.9 336.1,258.8 337.3,272.6 333.2,271.9" fill="#eae0b8"/>
<polygon points="336.1,258.8 344.3,260.1 344.7,262.3 336.5,260.9" fill="#cfcfcf"/>
<polygon points="333.2,271.9 338.3,272.8 339.4,286.4 335.3,285.6" fill="#eae0b8"/>
<polygon points="338.3,272.8 346.5,274.3 346.8,276.4 338.6,274.9" fill="#cfcfcf"/>
<polygon points="335.3,285.6 340.4,286.6 341.5,299.9 337.5,299.1" fill="#eae0b8"/>
<polygon points="340.4,286.6 348.5,288.1 348.8,290.2 340.8,288.6" fill="#cfcfcf"/>
<polygon points="337.5,299.1 342.5,300.1 343.6,313.1 339.6,312.2" fill="#eae0b8"/>
<polygon points="342.5,300.1 350.6,301.7 350.9,303.7 342.9,302.1" fill="#cfcfcf"/>
<polygon points="339.6,312.2 344.6,313.3 345.6,326.1 341.6,325.2" fill="#eae0b8"/>
<polygon points="344.6,313.3 352.6,315.0 352.9,317.0 344.9,315.3" fill="#cfcfcf"/>
<polygon points="330.7,169.2 336.8,169.7 337.9,185.6 333.1,185.2" fill="#eae0b8"/>
<polygon points="336.8,169.7 344.3,170.3 344.6,172.7 337.1,172.1" fill="#cfcfcf"/>
<polygon points="333.1,185.2 339.1,185.7 340.2,201.3 335.4,200.8" fill="#eae0b8"/>
<polygon points="339.1,185.7 346.5,186.4 346.9,188.8 339.4,188.1" fill="#cfcfcf"/>
<polygon points="335.4,200.8 341.4,201.4 342.4,216.6 337.7,216.1" fill="#eae0b8"/>
<polygon points="341.4,201.4 348.8,202.2 349.1,204.6 341.7,203.7" fill="#cfcfcf"/>
<polygon points="337.7,216.1 343.6,216.8 344.7,231.7 340.0,231.0" fill="#eae0b8"/>
<polygon points="343.6,216.8 351.0,217.7 351.3,220.0 344.0,219.1" fill="#cfcfcf"/>
<polygon points="340.0,231.0 345.8,231.8 346.8,246.4 342.2,245.7" fill="#eae0b8"/>
<polygon points="345.8,231.8 353.1,232.8 353.4,235.1 346.2,234.1" fill="#cfcfcf"/>
<polygon points="342.2,245.7 348.0,246.6 349.0,260.9 344.3,260.1" fill="#eae0b8"/>
<polygon points="348.0,246.6 355.2,247.7 355.5,249.9 348.3,248.8" fill="#cfcfcf"/>
<polygon points="344.3,260.1 350.1,261.1 351.0,275.1 346.5,274.3" fill="#eae0b8"/>
<polygon points="350.1,261.1 357.3,262.2 357.6,264.4 350.4,263.2" fill="#cfcfcf"/>
<polygon points="346.5,274.3 352.2,275.3 353.1,289.0 348.5,288.1" fill="#eae0b8"/>
<polygon points="352.2,275.3 359.3,276.5 359.6,278.6 352.5,277.4" fill="#cfcfcf"/>
<polygon points="348.5,288.1 354.2,289.2 355.1,302.6 350.6,301.7" fill="#eae0b8"/>
<polygon points="354.2,289.2 361.3,290.5 361.6,292.6 354.5,291.2" fill="#cfcfcf"/>
<polygon points="350.6,301.7 356.2,302.8 357.1,316.0 352.6,315.0" fill="#eae0b8"/>
<polygon points="356.2,302.8 363.2,304.2 363.5,306.3 356.5,304.9" fill="#cfcfcf"/>
<polygon points="352.6,315.0 358.2,316.2 359.0,329.1 354.5,328.1" fill="#eae0b8"/>
<polygon points="358.2,316.2 365.1,317.7 365.4,319.7 358.5,318.2" fill="#cfcfcf"/>
<polygon points="344.3,170.3 349.2,170.7 350.5,186.8 346.5,186.4" fill="#eae0b8"/>
<polygon points="349.2,170.7 356.7,171.3 357.1,173.7 349.6,173.1" fill="#cfcfcf"/>
<polygon points="346.5,186.4 351.5,186.9 352.7,202.6 348.8,202.2" fill="#eae0b8"/>
<polygon points="351.5,186.9 358.9,187.6 359.2,190.0 351.8,189.3" fill="#cfcfcf"/>
<polygon points="348.8,202.2 353.6,202.7 354.8,218.2 351.0,217.7" fill="#eae0b8"/>
<polygon points="353.6,202.7 361.0,203.5 361.4,205.9 354.0,205.1" fill="#cfcfcf"/>
<polygon points="351.0,217.7 355.8,218.3 356.9,233.4 353.1,232.8" fill="#eae0b8"/>
<polygon points="355.8,218.3 363.1,219.2 363.4,221.5 356.1,220.6" fill="#cfcfcf"/>
<polygon points="353.1,232.8 357.9,233.5 359.0,248.3 355.2,247.7" fill="#eae0b8"/>
<polygon points="357.9,233.5 365.2,234.5 365.5,236.8 358.2,235.7" fill="#cfcfcf"/>
<polygon points="355.2,247.7 360.0,248.4 361.0,262.9 357.3,262.2" fill="#eae0b8"/>
<polygon points="360.0,248.4 367.2,249.5 367.5,251.7 360.3,250.6" fill="#cfcfcf"/>
<polygon points="357.3,262.2 362.0,263.0 363.0,277.2 359.3,276.5" fill="#eae0b8"/>
<polygon points="362.0,263.0 369.1,264.2 369.4,266.4 362.3,265.2" fill="#cfcfcf"/>
<polygon points="359.3,276.5 364.0,277.3 365.0,291.2 361.3,290.5" fill="#eae0b8"/>
<polygon points="364.0,277.3 371.1,278.6 371.3,280.7 364.3,279.5" fill="#cfcfcf"/>
<polygon points="361.3,290.5 365.9,291.4 366.9,305.0 363.2,304.2" fill="#eae0b8"/>
<polygon points="365.9,291.4 372.9,292.7 373.2,294.8 366.2,293.5" fill="#cfcfcf"/>
<polygon points="363.2,304.2 367.8,305.2 368.8,318.5 365.1,317.7" fill="#eae0b8"/>
<polygon points="367.8,305.2 374.8,306.6 375.1,308.6 368.1,307.2" fill="#cfcfcf"/>
<polygon points="365.1,317.7 369.7,318.7 370.6,331.7 367.0,330.9" fill="#eae0b8"/>
<polygon points="369.7,318.7 376.6,320.2 376.9,322.2 370.0,320.7" fill="#cfcfcf"/>
<polygon points="356.7,171.3 363.4,171.8 364.2,188.1 358.9,187.6" fill="#eae0b8"/>
<polygon points="363.4,171.8 371.9,172.4 372.2,175.0 363.7,174.3" fill="#cfcfcf"/>
<polygon points="358.9,187.6 365.5,188.2 366.2,204.1 361.0,203.5" fill="#eae0b8"/>
<polygon points="365.5,188.2 373.9,189.0 374.2,191.4 365.8,190.6" fill="#cfcfcf"/>
<polygon points="361.0,203.5 367.5,204.2 368.3,219.8 363.1,219.2" fill="#eae0b8"/>
<polygon points="367.5,204.2 375.9,205.1 376.2,207.5 367.9,206.6" fill="#cfcfcf"/>
<polygon points="363.1,219.2 369.6,220.0 370.3,235.2 365.2,234.5" fill="#eae0b8"/>
<polygon points="369.6,220.0 377.9,221.0 378.2,223.3 369.9,222.3" fill="#cfcfcf"/>
<polygon points="365.2,234.5 371.6,235.4 372.2,250.2 367.2,249.5" fill="#eae0b8"/>
<polygon points="371.6,235.4 379.8,236.5 380.1,238.8 371.9,237.6" fill="#cfcfcf"/>
<polygon points="367.2,249.5 373.5,250.4 374.2,265.0 369.1,264.2" fill="#eae0b8"/>
<polygon points="373.5,250.4 381.7,251.7 382.0,253.9 373.8,252.7" fill="#cfcfcf"/>
<polygon points="369.1,264.2 375.4,265.2 376.0,279.5 371.1,278.6" fill="#eae0b8"/>
<polygon points="375.4,265.2 383.5,266.5 383.8,268.7 375.7,267.4" fill="#cfcfcf"/>
<polygon points="371.1,278.6 377.3,279.7 377.9,293.7 372.9,292.7" fill="#eae0b8"/>
<polygon points="377.3,279.7 385.3,281.1 385.6,283.3 377.6,281.8" fill="#cfcfcf"/>
<polygon points="372.9,292.7 379.1,293.9 379.7,307.6 374.8,306.6" fill="#eae0b8"/>
<polygon points="379.1,293.9 387.1,295.4 387.4,297.5 379.4,296.0" fill="#cfcfcf"/>
<polygon points="374.8,306.6 380.9,307.8 381.5,321.2 376.6,320.2" fill="#eae0b8"/>
<polygon points="380.9,307.8 388.8,309.4 389.1,311.5 381.2,309.9" fill="#cfcfcf"/>
<polygon points="376.6,320.2 382.7,321.5 383.2,334.6 378.4,333.5" fill="#eae0b8"/>
<polygon points="382.7,321.5 390.5,323.1 390.8,325.2 383.0,323.5" fill="#cfcfcf"/>
<polygon points="371.9,172.4 377.4,172.9 378.3,189.4 373.9,189.0" fill="#eae0b8"/>
<polygon points="377.4,172.9 388.4,173.7 388.7,176.3 377.8,175.4" fill="#cfcfcf"/>
<polygon points="373.9,189.0 379.4,189.5 380.3,205.6 375.9,205.1" fill="#eae0b8"/>
<polygon points="379.4,189.5 390.3,190.5 390.6,193.0 379.7,191.9" fill="#cfcfcf"/>
<polygon points="375.9,205.1 381.4,205.7 382.2,221.5 377.9,221.0" fill="#eae0b8"/>
<polygon points="381.4,205.7 392.2,206.9 392.4,209.3 381.7,208.1" fill="#cfcfcf"/>
<polygon points="377.9,221.0 383.3,221.6 384.1,237.1 379.8,236.5" fill="#eae0b8"/>
<polygon points="383.3,221.6 394.0,222.9 394.2,225.3 383.6,224.0" fill="#cfcfcf"/>
<polygon points="379.8,236.5 385.2,237.2 385.9,252.3 381.7,251.7" fill="#eae0b8"/>
<polygon points="385.2,237.2 395.7,238.6 396.0,241.0 385.5,239.5" fill="#cfcfcf"/>
<polygon points="381.7,251.7 387.0,252.5 387.7,267.2 383.5,266.5" fill="#eae0b8"/>
<polygon points="387.0,252.5 397.5,254.0 397.7,256.3 387.3,254.7" fill="#cfcfcf"/>
<polygon points="383.5,266.5 388.8,267.4 389.5,281.8 385.3,281.1" fill="#eae0b8"/>
<polygon points="388.8,267.4 399.2,269.1 399.4,271.3 389.1,269.6" fill="#cfcfcf"/>
<polygon points="385.3,281.1 390.6,282.0 391.2,296.2 387.1,295.4" fill="#eae0b8"/>
<polygon points="390.6,282.0 400.9,283.8 401.1,286.0 390.8,284.2" fill="#cfcfcf"/>
<polygon points="387.1,295.4 392.3,296.4 392.9,310.2 388.8,309.4" fill="#eae0b8"/>
<polygon points="392.3,296.4 402.5,298.3 402.7,300.5 392.5,298.5" fill="#cfcfcf"/>
<polygon points="388.8,309.4 394.0,310.4 394.6,324.0 390.5,323.1" fill="#eae0b8"/>
<polygon points="394.0,310.4 404.1,312.5 404.3,314.6 394.2,312.5" fill="#cfcfcf"/>
<polygon points="390.5,323.1 395.6,324.2 396.2,337.5 392.2,336.6" fill="#eae0b8"/>
<polygon points="395.6,324.2 405.7,326.4 405.9,328.4 395.9,326.3" fill="#cfcfcf"/>
<polygon points="388.4,173.7 391.4,174.0 392.7,190.7 390.3,190.5" fill="#eae0b8"/>
<polygon points="391.4,174.0 422.9,176.4 423.2,179.0 391.7,176.5" fill="#cfcfcf"/>
<polygon points="390.3,190.5 393.3,190.8 394.5,207.1 392.2,206.9" fill="#eae0b8"/>
<polygon points="393.3,190.8 424.5,193.7 424.7,196.2 393.6,193.3" fill="#cfcfcf"/>
<polygon points="392.2,206.9 395.1,207.2 396.3,223.2 394.0,222.9" fill="#eae0b8"/>
<polygon points="395.1,207.2 426.0,210.5 426.3,213.0 395.4,209.6" fill="#cfcfcf"/>
<polygon points="394.0,222.9 396.9,223.3 398.1,239.0 395.7,238.6" fill="#eae0b8"/>
<polygon points="396.9,223.3 427.5,227.0 427.8,229.5 397.2,225.7" fill="#cfcfcf"/>
<polygon points="395.7,238.6 398.7,239.0 399.8,254.4 397.5,254.0" fill="#eae0b8"/>
<polygon points="398.7,239.0 429.0,243.2 429.2,245.6 398.9,241.4" fill="#cfcfcf"/>
<polygon points="397.5,254.0 400.4,254.5 401.5,269.5 399.2,269.1" fill="#eae0b8"/>
<polygon points="400.4,254.5 430.4,259.0 430.7,261.3 400.6,256.7" fill="#cfcfcf"/>
<polygon points="399.2,269.1 402.1,269.6 403.1,284.2 400.9,283.8" fill="#eae0b8"/>
<polygon points="402.1,269.6 431.8,274.4 432.1,276.7 402.3,271.8" fill="#cfcfcf"/>
<polygon points="400.9,283.8 403.7,284.3 404.7,298.7 402.5,298.3" fill="#eae0b8"/>
<polygon points="403.7,284.3 433.2,289.6 433.4,291.8 403.9,286.5" fill="#cfcfcf"/>
<polygon points="402.5,298.3 405.3,298.8 406.3,312.9 404.1,312.5" fill="#eae0b8"/>
<polygon points="405.3,298.8 434.6,304.4 434.8,306.6 405.5,301.0" fill="#cfcfcf"/>
<polygon points="404.1,312.5 406.9,313.0 407.9,326.8 405.7,326.4" fill="#eae0b8"/>
<polygon points="406.9,313.0 435.9,318.9 436.1,321.0 407.1,315.1" fill="#cfcfcf"/>
<polygon points="405.7,326.4 408.4,327.0 409.4,340.5 407.2,340.0" fill="#eae0b8"/>
<polygon points="408.4,327.0 437.2,333.1 437.4,335.2 408.7,329.0" fill="#cfcfcf"/>
<polygon points="422.9,176.4 428.0,176.8 428.5,194.0 424.5,193.7" fill="#eae0b8"/>
<polygon points="428.0,176.8 444.3,178.1 444.5,180.8 428.2,179.4" fill="#cfcfcf"/>
<polygon points="424.5,193.7 429.5,194.1 430.0,211.0 426.0,210.5" fill="#eae0b8"/>
<polygon points="429.5,194.1 445.7,195.6 445.9,198.2 429.7,196.7" fill="#cfcfcf"/>
<polygon points="426.0,210.5 431.0,211.1 431.5,227.5 427.5,227.0" fill="#eae0b8"/>
<polygon points="431.0,211.1 447.0,212.8 447.2,215.3 431.2,213.6" fill="#cfcfcf"/>
<polygon points="427.5,227.0 432.5,227.6 432.9,243.7 429.0,243.2" fill="#eae0b8"/>
<polygon points="432.5,227.6 448.3,229.6 448.5,232.1 432.7,230.1" fill="#cfcfcf"/>
<polygon points="429.0,243.2 433.9,243.8 434.3,259.5 430.4,259.0" fill="#eae0b8"/>
<polygon points="433.9,243.8 449.5,246.0 449.7,248.4 434.1,246.2" fill="#cfcfcf"/>
<polygon points="430.4,259.0 435.3,259.7 435.7,275.0 431.8,274.4" fill="#eae0b8"/>
<polygon points="435.3,259.7 450.8,262.0 451.0,264.4 435.5,262.0" fill="#cfcfcf"/>
<polygon points="431.8,274.4 436.6,275.2 437.0,290.2 433.2,289.6" fill="#eae0b8"/>
<polygon points="436.6,275.2 452.0,277.7 452.2,280.0 436.8,277.5" fill="#cfcfcf"/>
<polygon points="433.2,289.6 437.9,290.4 438.3,305.1 434.6,304.4" fill="#eae0b8"/>
<polygon points="437.9,290.4 453.2,293.1 453.3,295.3 438.1,292.6" fill="#cfcfcf"/>
<polygon points="434.6,304.4 439.3,305.3 439.6,319.6 435.9,318.9" fill="#eae0b8"/>
<polygon points="439.3,305.3 454.3,308.1 454.5,310.3 439.4,307.5" fill="#cfcfcf"/>
<polygon points="435.9,318.9 440.5,319.8 440.9,333.9 437.2,333.1" fill="#eae0b8"/>
<polygon points="440.5,319.8 455.5,322.8 455.6,325.0 440.7,322.0" fill="#cfcfcf"/>
<polygon points="437.2,333.1 441.8,334.1 442.1,347.9 438.4,347.0" fill="#eae0b8"/>
<polygon points="441.8,334.1 456.6,337.2 456.7,339.4 442.0,336.2" fill="#cfcfcf"/>
<polygon points="444.3,178.1 448.7,178.4 449.1,196.0 445.7,195.6" fill="#eae0b8"/>
<polygon points="448.7,178.4 461.9,179.5 462.1,182.2 448.9,181.1" fill="#cfcfcf"/>
<polygon points="445.7,195.6 450.0,196.0 450.4,213.2 447.0,212.8" fill="#eae0b8"/>
<polygon points="450.0,196.0 463.1,197.3 463.3,199.9 450.2,198.7" fill="#cfcfcf"/>
<polygon points="447.0,212.8 451.3,213.3 451.7,230.0 448.3,229.6" fill="#eae0b8"/>
<polygon points="451.3,213.3 464.3,214.7 464.4,217.2 451.4,215.8" fill="#cfcfcf"/>
<polygon points="448.3,229.6 452.5,230.1 452.9,246.4 449.5,246.0" fill="#eae0b8"/>
<polygon points="452.5,230.1 465.4,231.7 465.5,234.2 452.7,232.6" fill="#cfcfcf"/>
<polygon points="449.5,246.0 453.7,246.5 454.1,262.5 450.8,262.0" fill="#eae0b8"/>
<polygon points="453.7,246.5 466.5,248.3 466.6,250.7 453.9,249.0" fill="#cfcfcf"/>
<polygon points="450.8,262.0 454.9,262.6 455.3,278.2 452.0,277.7" fill="#eae0b8"/>
<polygon points="454.9,262.6 467.5,264.5 467.7,266.9 455.1,265.0" fill="#cfcfcf"/>
<polygon points="452.0,277.7 456.1,278.4 456.4,293.6 453.2,293.1" fill="#eae0b8"/>
<polygon points="456.1,278.4 468.6,280.4 468.7,282.8 456.3,280.7" fill="#cfcfcf"/>
<polygon points="453.2,293.1 457.2,293.8 457.5,308.7 454.3,308.1" fill="#eae0b8"/>
<polygon points="457.2,293.8 469.6,296.0 469.7,298.3 457.4,296.1" fill="#cfcfcf"/>
<polygon points="454.3,308.1 458.4,308.9 458.7,323.5 455.5,322.8" fill="#eae0b8"/>
<polygon points="458.4,308.9 470.6,311.2 470.7,313.4 458.5,311.1" fill="#cfcfcf"/>
<polygon points="455.5,322.8 459.5,323.6 459.7,337.9 456.6,337.2" fill="#eae0b8"/>
<polygon points="459.5,323.6 471.6,326.1 471.7,328.3 459.6,325.8" fill="#cfcfcf"/>
<polygon points="456.6,337.2 460.5,338.1 460.8,352.1 457.7,351.4" fill="#eae0b8"/>
<polygon points="460.5,338.1 472.5,340.7 472.7,342.8 460.7,340.2" fill="#cfcfcf"/>
<polygon points="461.9,179.5 466.0,179.8 466.3,197.6 463.1,197.3" fill="#eae0b8"/>
<polygon points="466.0,179.8 481.6,181.0 481.8,183.7 466.2,182.5" fill="#cfcfcf"/>
<polygon points="463.1,197.3 467.2,197.6 467.5,215.0 464.3,214.7" fill="#eae0b8"/>
<polygon points="467.2,197.6 482.6,199.1 482.7,201.8 467.3,200.3" fill="#cfcfcf"/>
<polygon points="464.3,214.7 468.3,215.1 468.5,232.0 465.4,231.7" fill="#eae0b8"/>
<polygon points="468.3,215.1 483.5,216.7 483.7,219.3 468.4,217.7" fill="#cfcfcf"/>
<polygon points="465.4,231.7 469.3,232.1 469.6,248.7 466.5,248.3" fill="#eae0b8"/>
<polygon points="469.3,232.1 484.4,234.0 484.6,236.5 469.5,234.7" fill="#cfcfcf"/>
<polygon points="466.5,248.3 470.4,248.8 470.6,265.0 467.5,264.5" fill="#eae0b8"/>
<polygon points="470.4,248.8 485.3,250.8 485.5,253.3 470.5,251.3" fill="#cfcfcf"/>
<polygon points="467.5,264.5 471.4,265.1 471.6,280.9 468.6,280.4" fill="#eae0b8"/>
<polygon points="471.4,265.1 486.2,267.3 486.3,269.8 471.6,267.5" fill="#cfcfcf"/>
<polygon points="468.6,280.4 472.4,281.0 472.6,296.5 469.6,296.0" fill="#eae0b8"/>
<polygon points="472.4,281.0 487.1,283.4 487.2,285.8 472.6,283.4" fill="#cfcfcf"/>
<polygon points="469.6,296.0 473.4,296.6 473.6,311.8 470.6,311.2" fill="#eae0b8"/>
<polygon points="473.4,296.6 487.9,299.2 488.0,301.5 473.5,298.9" fill="#cfcfcf"/>
<polygon points="470.6,311.2 474.4,311.9 474.5,326.7 471.6,326.1" fill="#eae0b8"/>
<polygon points="474.4,311.9 488.7,314.6 488.8,316.9 474.5,314.2" fill="#cfcfcf"/>
<polygon points="471.6,326.1 475.3,326.8 475.5,341.3 472.5,340.7" fill="#eae0b8"/>
<polygon points="475.3,326.8 489.5,329.7 489.6,331.9 475.4,329.0" fill="#cfcfcf"/>
<polygon points="472.5,340.7 476.2,341.4 476.4,355.6 473.5,354.9" fill="#eae0b8"/>
<polygon points="476.2,341.4 490.3,344.5 490.4,346.6 476.4,343.6" fill="#cfcfcf"/>
<polygon points="231.6,164.0 236.2,164.3 238.7,176.4 234.2,176.0" fill="#84847a"/>
<polygon points="234.7,178.4 239.2,178.8 241.7,190.7 237.2,190.2" fill="#84847a"/>
<polygon points="237.7,192.6 242.2,193.1 244.7,204.7 240.2,204.2" fill="#84847a"/>
<polygon points="240.7,206.5 245.2,207.1 247.6,218.5 243.1,217.9" fill="#84847a"/>
<polygon points="243.6,220.2 248.1,220.8 250.4,232.0 246.0,231.3" fill="#84847a"/>
<polygon points="246.5,233.6 250.9,234.3 253.2,245.3 248.8,244.5" fill="#84847a"/>
<polygon points="249.3,246.8 253.7,247.5 256.0,258.3 251.6,257.5" fill="#84847a"/>
<polygon points="252.1,259.7 256.4,260.5 258.7,271.1 254.3,270.3" fill="#84847a"/>
<polygon points="254.8,272.4 259.1,273.3 261.3,283.7 257.0,282.8" fill="#84847a"/>
<polygon points="257.5,284.9 261.8,285.8 263.9,296.1 259.6,295.2" fill="#84847a"/>
<polygon points="260.1,297.2 264.4,298.2 266.5,308.2 262.2,307.3" fill="#84847a"/>
<polygon points="406.4,178.0 414.3,178.7 415.6,192.9 407.9,192.1" fill="#84847a"/>
<polygon points="408.1,195.0 415.9,195.7 417.3,209.6 409.5,208.8" fill="#84847a"/>
<polygon points="409.8,211.6 417.5,212.4 418.8,226.0 411.2,225.0" fill="#84847a"/>
<polygon points="411.5,227.8 419.1,228.7 420.4,242.0 412.8,241.0" fill="#84847a"/>
<polygon points="413.1,243.6 420.7,244.7 421.9,257.7 414.4,256.6" fill="#84847a"/>
<polygon points="414.7,259.2 422.2,260.3 423.4,273.0 416.0,271.8" fill="#84847a"/>
<polygon points="416.2,274.4 423.6,275.6 424.8,288.1 417.5,286.8" fill="#84847a"/>
<polygon points="417.7,289.3 425.1,290.6 426.3,302.8 419.0,301.4" fill="#84847a"/>
<polygon points="419.2,303.9 426.5,305.3 427.7,317.2 420.4,315.8" fill="#84847a"/>
<polygon points="420.7,318.2 427.9,319.7 429.0,331.4 421.9,329.8" fill="#84847a"/>
<polygon points="422.1,332.2 429.3,333.7 430.4,345.2 423.3,343.6" fill="#84847a"/>
<polygon points="181.3,289.0 250.6,304.6 254.0,319.9 185.1,303.4" fill="#f6f9fc"/>
<polygon points="250.6,304.6 268.3,308.6 270.8,320.6 253.2,316.4" fill="#f6f9fc"/>
<polygon points="268.3,308.6 382.8,334.5 385.1,352.1 271.7,324.7" fill="#f6f9fc"/>
<polygon points="382.8,334.5 412.9,341.3 414.8,358.7 385.0,351.5" fill="#f6f9fc"/>
<polygon points="412.9,341.3 442.9,348.0 444.1,361.1 414.3,354.0" fill="#f6f9fc"/>
<polygon points="442.9,348.0 491.0,358.9 492.0,377.2 444.5,365.8" fill="#f6f9fc"/>
<polygon points="181.3,289.0 184.9,289.8 188.8,304.2 185.1,303.4" fill="#eae0b8"/>
<polygon points="195.5,293.8 198.2,294.4 200.9,305.1 198.2,304.4" fill="#727272"/>
<polygon points="190.5,291.1 194.1,291.9 197.9,306.4 194.3,305.6" fill="#eae0b8"/>
<polygon points="199.6,293.1 205.5,294.5 209.2,309.2 203.3,307.7" fill="#eae0b8"/>
<polygon points="221.0,299.6 224.7,300.5 227.3,311.4 223.7,310.5" fill="#727272"/>
<polygon points="214.6,296.5 219.4,297.6 223.0,312.5 218.2,311.3" fill="#eae0b8"/>
<polygon points="226.8,299.3 230.0,300.0 233.5,315.0 230.3,314.2" fill="#eae0b8"/>
<polygon points="241.0,304.2 244.5,305.0 247.0,316.1 243.5,315.2" fill="#727272"/>
<polygon points="234.8,301.1 239.4,302.1 242.9,317.3 238.3,316.2" fill="#eae0b8"/>
<polygon points="258.9,308.2 266.2,309.9 268.6,321.2 261.3,319.5" fill="#727272"/>
<polygon points="246.5,303.7 252.0,305.0 255.3,320.3 249.9,319.0" fill="#eae0b8"/>
<polygon points="278.0,312.6 282.1,313.5 284.5,325.6 280.4,324.6" fill="#727272"/>
<polygon points="270.8,309.2 276.2,310.4 279.5,326.6 274.2,325.4" fill="#eae0b8"/>
<polygon points="284.5,312.3 289.9,313.5 293.1,329.9 287.7,328.6" fill="#eae0b8"/>
<polygon points="309.7,319.8 313.6,320.7 315.8,333.1 311.9,332.1" fill="#727272"/>
<polygon points="302.9,316.4 308.0,317.6 311.1,334.3 305.9,333.0" fill="#eae0b8"/>
<polygon points="315.9,319.4 320.9,320.5 323.8,337.3 318.8,336.1" fill="#eae0b8"/>
<polygon points="335.3,325.6 339.3,326.5 341.3,339.2 337.4,338.2" fill="#727272"/>
<polygon points="328.4,322.2 333.7,323.4 336.5,340.4 331.2,339.1" fill="#eae0b8"/>
<polygon points="341.6,325.2 346.6,326.3 349.3,343.5 344.4,342.3" fill="#eae0b8"/>
<polygon points="361.0,331.4 364.7,332.3 366.6,345.2 362.9,344.3" fill="#727272"/>
<polygon points="354.5,328.1 359.5,329.2 362.0,346.6 357.1,345.4" fill="#eae0b8"/>
<polygon points="367.0,330.9 371.5,331.9 373.9,349.4 369.4,348.3" fill="#eae0b8"/>
<polygon points="385.5,337.0 389.7,338.0 391.3,351.1 387.2,350.1" fill="#727272"/>
<polygon points="378.4,333.5 383.9,334.7 386.2,352.4 380.7,351.1" fill="#eae0b8"/>
<polygon points="392.2,336.6 397.3,337.7 399.3,354.9 394.3,353.7" fill="#eae0b8"/>
<polygon points="422.8,345.5 432.3,347.6 433.5,360.5 424.1,358.3" fill="#727272"/>
<polygon points="407.2,340.0 410.0,340.6 411.9,357.9 409.2,357.3" fill="#eae0b8"/>
<polygon points="448.2,351.3 453.9,352.6 454.6,360.9 448.8,359.5" fill="#727272"/>
<polygon points="438.4,347.0 443.0,348.1 444.1,361.1 439.6,360.0" fill="#eae0b8"/>
<polygon points="465.7,355.2 470.4,356.3 471.3,369.5 466.6,368.4" fill="#727272"/>
<polygon points="457.7,351.4 461.6,352.3 462.9,370.2 459.0,369.3" fill="#eae0b8"/>
<polygon points="482.3,359.0 487.6,360.2 488.3,373.6 483.1,372.4" fill="#727272"/>
<polygon points="473.5,354.9 477.1,355.8 478.3,373.9 474.7,373.1" fill="#eae0b8"/>
<line x1="145.4" y1="154.8" x2="481.6" y2="181.0" stroke="#2e2e2b" stroke-width="2.10"/>
<line x1="148.9" y1="168.0" x2="482.6" y2="199.1" stroke="#2e2e2b" stroke-width="2.10"/>
<line x1="152.4" y1="181.0" x2="483.5" y2="216.7" stroke="#2e2e2b" stroke-width="2.10"/>
<line x1="155.8" y1="193.8" x2="484.4" y2="234.0" stroke="#2e2e2b" stroke-width="2.10"/>
<line x1="159.2" y1="206.4" x2="485.3" y2="250.8" stroke="#2e2e2b" stroke-width="2.10"/>
<line x1="162.5" y1="218.8" x2="486.2" y2="267.3" stroke="#2e2e2b" stroke-width="2.10"/>
<line x1="165.7" y1="231.0" x2="487.1" y2="283.4" stroke="#2e2e2b" stroke-width="2.10"/>
<line x1="168.9" y1="243.0" x2="487.9" y2="299.2" stroke="#2e2e2b" stroke-width="2.10"/>
<line x1="172.1" y1="254.7" x2="488.7" y2="314.6" stroke="#2e2e2b" stroke-width="2.10"/>
<line x1="175.2" y1="266.3" x2="489.5" y2="329.7" stroke="#2e2e2b" stroke-width="2.10"/>
<line x1="178.2" y1="277.8" x2="490.3" y2="344.5" stroke="#2e2e2b" stroke-width="2.10"/>
<line x1="181.3" y1="289.0" x2="491.0" y2="358.9" stroke="#2e2e2b" stroke-width="2.10"/>
<polygon points="181.3,289.0 491.0,358.9 491.2,362.0 181.9,291.4" fill="#6a6a66"/>
<line x1="185.1" y1="303.4" x2="254.0" y2="319.9" stroke="#2e2e2b" stroke-width="2.00"/>
<line x1="253.2" y1="316.4" x2="270.8" y2="320.6" stroke="#2e2e2b" stroke-width="2.00"/>
<line x1="271.7" y1="324.7" x2="385.1" y2="352.1" stroke="#2e2e2b" stroke-width="2.00"/>
<line x1="385.0" y1="351.5" x2="414.8" y2="358.7" stroke="#2e2e2b" stroke-width="2.00"/>
<line x1="414.3" y1="354.0" x2="444.1" y2="361.1" stroke="#2e2e2b" stroke-width="2.00"/>
<line x1="444.5" y1="365.8" x2="492.0" y2="377.2" stroke="#2e2e2b" stroke-width="2.00"/>
<line x1="145.4" y1="154.8" x2="185.1" y2="303.4" stroke="#2e2e2b" stroke-width="1.20"/>
<line x1="155.1" y1="155.6" x2="194.3" y2="305.6" stroke="#2e2e2b" stroke-width="1.20"/>
<line x1="164.6" y1="156.3" x2="203.3" y2="307.7" stroke="#2e2e2b" stroke-width="1.20"/>
<line x1="180.4" y1="157.5" x2="218.2" y2="311.3" stroke="#2e2e2b" stroke-width="1.20"/>
<line x1="193.4" y1="158.5" x2="230.3" y2="314.2" stroke="#2e2e2b" stroke-width="1.20"/>
<line x1="201.9" y1="159.2" x2="238.3" y2="316.2" stroke="#2e2e2b" stroke-width="1.20"/>
<line x1="214.3" y1="160.2" x2="249.9" y2="319.0" stroke="#2e2e2b" stroke-width="1.20"/>
<line x1="240.3" y1="162.2" x2="274.2" y2="325.4" stroke="#2e2e2b" stroke-width="1.20"/>
<line x1="254.9" y1="163.3" x2="287.7" y2="328.6" stroke="#2e2e2b" stroke-width="1.20"/>
<line x1="274.7" y1="164.9" x2="305.9" y2="333.0" stroke="#2e2e2b" stroke-width="1.20"/>
<line x1="288.7" y1="166.0" x2="318.8" y2="336.1" stroke="#2e2e2b" stroke-width="1.20"/>
<line x1="302.3" y1="167.0" x2="331.2" y2="339.1" stroke="#2e2e2b" stroke-width="1.20"/>
<line x1="316.7" y1="168.1" x2="344.4" y2="342.3" stroke="#2e2e2b" stroke-width="1.20"/>
<line x1="330.7" y1="169.2" x2="357.1" y2="345.4" stroke="#2e2e2b" stroke-width="1.20"/>
<line x1="344.3" y1="170.3" x2="369.4" y2="348.3" stroke="#2e2e2b" stroke-width="1.20"/>
<line x1="356.7" y1="171.3" x2="380.7" y2="351.1" stroke="#2e2e2b" stroke-width="1.20"/>
<line x1="371.9" y1="172.4" x2="394.3" y2="353.7" stroke="#2e2e2b" stroke-width="1.20"/>
<line x1="388.4" y1="173.7" x2="409.2" y2="357.3" stroke="#2e2e2b" stroke-width="1.20"/>
<line x1="422.9" y1="176.4" x2="439.6" y2="360.0" stroke="#2e2e2b" stroke-width="1.20"/>
<line x1="444.3" y1="178.1" x2="459.0" y2="369.3" stroke="#2e2e2b" stroke-width="1.20"/>
<line x1="461.9" y1="179.5" x2="474.7" y2="373.1" stroke="#2e2e2b" stroke-width="1.20"/>
<line x1="481.6" y1="181.0" x2="492.0" y2="377.2" stroke="#2e2e2b" stroke-width="1.20"/>
<polygon points="143.1,146.5 481.0,169.6 481.6,181.0 145.4,154.8" fill="#7d7a64"/>
<polygon points="144.8,152.8 481.5,178.3 481.6,181.0 145.4,154.8" fill="#4f4d42"/>
<line x1="143.1" y1="146.5" x2="481.0" y2="169.6" stroke="#2e2e2b" stroke-width="1.00"/>
<polygon points="143.0,146.0 481.0,169.0 521.0,146.0 202.0,131.0" fill="#bcbcbe"/>
<polygon points="143.0,146.0 202.0,131.0 201.0,135.7 164.1,145.3" fill="#eae0b8"/>
<polygon points="202.0,131.0 521.0,146.0 504.2,151.5 193.7,135.3" fill="#7d7a64"/>
<polygon points="481.0,169.0 521.0,146.0 504.2,151.5 477.6,166.5" fill="#d8cfa6"/>
<polygon points="391.8,150.0 403.3,150.6 405.7,149.6 394.3,149.0" fill="#2c2c2c" stroke="#2c2c2c" stroke-width="0.5" stroke-linejoin="round"/>
<polygon points="390.7,156.0 394.3,156.2 395.8,155.5 392.3,155.3" fill="#3d3d3d" stroke="#3d3d3d" stroke-width="0.5" stroke-linejoin="round"/>
<polygon points="325.9,148.5 328.7,148.7 330.4,148.1 327.7,147.9" fill="#3d3d3d" stroke="#3d3d3d" stroke-width="0.5" stroke-linejoin="round"/>
<polygon points="421.1,150.8 427.9,151.2 430.3,150.2 423.5,149.8" fill="#2c2c2c" stroke="#2c2c2c" stroke-width="0.5" stroke-linejoin="round"/>
<polygon points="284.0,152.0 293.3,152.6 295.2,152.0 285.8,151.4" fill="#333333" stroke="#333333" stroke-width="0.5" stroke-linejoin="round"/>
<polygon points="210.9,145.7 215.1,145.9 217.0,145.4 212.8,145.1" fill="#333333" stroke="#333333" stroke-width="0.5" stroke-linejoin="round"/>
<polygon points="311.4,143.8 315.4,144.0 318.5,142.9 314.4,142.7" fill="#4a4a4a" stroke="#4a4a4a" stroke-width="0.5" stroke-linejoin="round"/>
<polygon points="287.7,150.7 290.8,150.9 292.8,150.2 289.8,150.0" fill="#2c2c2c" stroke="#2c2c2c" stroke-width="0.5" stroke-linejoin="round"/>
<polygon points="363.0,156.4 369.1,156.8 371.0,156.0 364.9,155.6" fill="#3d3d3d" stroke="#3d3d3d" stroke-width="0.5" stroke-linejoin="round"/>
<polygon points="353.2,151.2 357.6,151.5 359.3,150.8 355.0,150.5" fill="#2c2c2c" stroke="#2c2c2c" stroke-width="0.5" stroke-linejoin="round"/>
<polygon points="266.7,146.7 273.1,147.1 275.3,146.4 268.9,146.0" fill="#4a4a4a" stroke="#4a4a4a" stroke-width="0.5" stroke-linejoin="round"/>
<polygon points="170.7,144.3 173.8,144.5 177.4,143.5 174.3,143.3" fill="#333333" stroke="#333333" stroke-width="0.5" stroke-linejoin="round"/>
<polygon points="324.3,149.6 331.2,150.0 334.2,148.9 327.4,148.5" fill="#3d3d3d" stroke="#3d3d3d" stroke-width="0.5" stroke-linejoin="round"/>
<polygon points="213.2,140.4 220.3,140.8 223.5,139.9 216.4,139.5" fill="#2c2c2c" stroke="#2c2c2c" stroke-width="0.5" stroke-linejoin="round"/>
<polygon points="471.8,152.4 477.3,152.7 479.1,151.8 473.6,151.5" fill="#3d3d3d" stroke="#3d3d3d" stroke-width="0.5" stroke-linejoin="round"/>
<polygon points="275.6,142.2 281.8,142.6 283.8,142.0 277.6,141.6" fill="#3d3d3d" stroke="#3d3d3d" stroke-width="0.5" stroke-linejoin="round"/>
<polygon points="356.6,148.8 362.0,149.1 364.2,148.3 358.8,148.0" fill="#2c2c2c" stroke="#2c2c2c" stroke-width="0.5" stroke-linejoin="round"/>
<polygon points="243.0,143.4 251.6,143.9 253.1,143.5 244.5,143.0" fill="#3d3d3d" stroke="#3d3d3d" stroke-width="0.5" stroke-linejoin="round"/>
<polygon points="294.3,148.2 297.3,148.4 300.4,147.4 297.5,147.2" fill="#2c2c2c" stroke="#2c2c2c" stroke-width="0.5" stroke-linejoin="round"/>
<polygon points="255.0,148.0 264.5,148.6 267.0,147.8 257.6,147.2" fill="#333333" stroke="#333333" stroke-width="0.5" stroke-linejoin="round"/>
<polygon points="391.5,157.7 398.8,158.2 400.3,157.5 393.1,157.0" fill="#4a4a4a" stroke="#4a4a4a" stroke-width="0.5" stroke-linejoin="round"/>
<polygon points="191.4,138.2 199.2,138.7 201.5,138.0 193.7,137.6" fill="#4a4a4a" stroke="#4a4a4a" stroke-width="0.5" stroke-linejoin="round"/>
<polygon points="252.5,147.2 258.2,147.5 261.4,146.5 255.7,146.2" fill="#2c2c2c" stroke="#2c2c2c" stroke-width="0.5" stroke-linejoin="round"/>
<polygon points="412.5,149.1 424.4,149.7 426.5,148.8 414.6,148.1" fill="#4a4a4a" stroke="#4a4a4a" stroke-width="0.5" stroke-linejoin="round"/>
<polygon points="223.4,143.3 229.0,143.6 231.6,142.9 226.0,142.6" fill="#3d3d3d" stroke="#3d3d3d" stroke-width="0.5" stroke-linejoin="round"/>
<polygon points="342.2,149.3 345.2,149.5 347.1,148.8 344.1,148.7" fill="#3d3d3d" stroke="#3d3d3d" stroke-width="0.5" stroke-linejoin="round"/>
<polygon points="257.6,140.7 264.8,141.1 268.0,140.1 260.8,139.8" fill="#3d3d3d" stroke="#3d3d3d" stroke-width="0.5" stroke-linejoin="round"/>
<polygon points="320.6,154.3 328.0,154.7 329.9,154.1 322.5,153.6" fill="#3d3d3d" stroke="#3d3d3d" stroke-width="0.5" stroke-linejoin="round"/>
<polygon points="274.0,143.2 281.0,143.5 283.9,142.6 276.9,142.3" fill="#3d3d3d" stroke="#3d3d3d" stroke-width="0.5" stroke-linejoin="round"/>
<polygon points="238.3,145.0 246.8,145.5 248.6,145.0 240.1,144.5" fill="#4a4a4a" stroke="#4a4a4a" stroke-width="0.5" stroke-linejoin="round"/>
<polygon points="462.9,157.2 471.9,157.7 473.2,157.0 464.3,156.5" fill="#3d3d3d" stroke="#3d3d3d" stroke-width="0.5" stroke-linejoin="round"/>
<polygon points="307.4,146.3 315.6,146.7 318.2,145.8 310.2,145.3" fill="#333333" stroke="#333333" stroke-width="0.5" stroke-linejoin="round"/>
<polygon points="455.1,156.7 468.2,157.5 469.7,156.7 456.7,156.0" fill="#3d3d3d" stroke="#3d3d3d" stroke-width="0.5" stroke-linejoin="round"/>
<polygon points="178.1,143.7 182.9,144.0 185.8,143.2 181.1,142.9" fill="#333333" stroke="#333333" stroke-width="0.5" stroke-linejoin="round"/>
<polygon points="229.7,141.6 238.4,142.1 241.7,141.1 233.1,140.6" fill="#333333" stroke="#333333" stroke-width="0.5" stroke-linejoin="round"/>
<polygon points="462.6,161.9 469.5,162.3 470.9,161.5 464.0,161.1" fill="#333333" stroke="#333333" stroke-width="0.5" stroke-linejoin="round"/>
<polygon points="281.1,148.2 288.6,148.6 290.1,148.1 282.7,147.7" fill="#333333" stroke="#333333" stroke-width="0.5" stroke-linejoin="round"/>
<polygon points="321.8,150.1 326.8,150.3 328.9,149.6 324.0,149.3" fill="#2c2c2c" stroke="#2c2c2c" stroke-width="0.5" stroke-linejoin="round"/>
<polygon points="334.6,145.1 341.6,145.5 343.4,144.8 336.4,144.4" fill="#3d3d3d" stroke="#3d3d3d" stroke-width="0.5" stroke-linejoin="round"/>
<polygon points="266.5,145.0 275.7,145.5 278.7,144.6 269.5,144.1" fill="#4a4a4a" stroke="#4a4a4a" stroke-width="0.5" stroke-linejoin="round"/>
<polygon points="322.5,148.4 329.5,148.8 331.7,148.1 324.7,147.7" fill="#333333" stroke="#333333" stroke-width="0.5" stroke-linejoin="round"/>
<polygon points="339.4,145.4 349.9,146.0 352.2,145.1 341.7,144.6" fill="#3d3d3d" stroke="#3d3d3d" stroke-width="0.5" stroke-linejoin="round"/>
<polygon points="355.7,152.3 361.4,152.7 364.4,151.5 358.7,151.2" fill="#333333" stroke="#333333" stroke-width="0.5" stroke-linejoin="round"/>
<polygon points="385.7,153.6 397.7,154.3 399.8,153.5 387.8,152.7" fill="#4a4a4a" stroke="#4a4a4a" stroke-width="0.5" stroke-linejoin="round"/>
<polygon points="287.2,142.5 296.2,143.0 298.7,142.2 289.6,141.7" fill="#3d3d3d" stroke="#3d3d3d" stroke-width="0.5" stroke-linejoin="round"/>
<polygon points="247.4,147.1 249.8,147.3 253.2,146.2 250.8,146.1" fill="#3d3d3d" stroke="#3d3d3d" stroke-width="0.5" stroke-linejoin="round"/>
<polygon points="259.7,147.5 265.6,147.9 267.3,147.3 261.4,147.0" fill="#4a4a4a" stroke="#4a4a4a" stroke-width="0.5" stroke-linejoin="round"/>
<polygon points="355.8,152.2 362.8,152.7 365.1,151.8 358.1,151.3" fill="#333333" stroke="#333333" stroke-width="0.5" stroke-linejoin="round"/>
<polygon points="392.7,156.1 398.3,156.5 399.8,155.8 394.2,155.5" fill="#3d3d3d" stroke="#3d3d3d" stroke-width="0.5" stroke-linejoin="round"/>
<polygon points="334.0,148.6 340.6,149.0 343.1,148.1 336.5,147.7" fill="#2c2c2c" stroke="#2c2c2c" stroke-width="0.5" stroke-linejoin="round"/>
<polygon points="366.8,149.5 375.0,150.0 377.5,149.0 369.4,148.5" fill="#2c2c2c" stroke="#2c2c2c" stroke-width="0.5" stroke-linejoin="round"/>
<polygon points="358.9,152.8 368.4,153.3 370.7,152.4 361.3,151.8" fill="#2c2c2c" stroke="#2c2c2c" stroke-width="0.5" stroke-linejoin="round"/>
<polygon points="223.9,147.1 230.8,147.5 232.7,147.0 225.8,146.5" fill="#4a4a4a" stroke="#4a4a4a" stroke-width="0.5" stroke-linejoin="round"/>
<polygon points="290.4,146.4 298.3,146.9 300.8,146.0 293.0,145.6" fill="#4a4a4a" stroke="#4a4a4a" stroke-width="0.5" stroke-linejoin="round"/>
<polygon points="419.0,155.1 428.8,155.7 431.2,154.6 421.4,154.0" fill="#3d3d3d" stroke="#3d3d3d" stroke-width="0.5" stroke-linejoin="round"/>
<polygon points="296.7,145.0 301.5,145.3 302.9,144.8 298.1,144.6" fill="#4a4a4a" stroke="#4a4a4a" stroke-width="0.5" stroke-linejoin="round"/>
<polygon points="353.7,151.2 359.2,151.6 360.8,151.0 355.3,150.6" fill="#4a4a4a" stroke="#4a4a4a" stroke-width="0.5" stroke-linejoin="round"/>
<polygon points="318.4,149.6 325.4,150.1 326.9,149.5 319.9,149.1" fill="#333333" stroke="#333333" stroke-width="0.5" stroke-linejoin="round"/>
<polygon points="354.0,146.4 359.6,146.7 361.5,145.9 356.1,145.6" fill="#2c2c2c" stroke="#2c2c2c" stroke-width="0.5" stroke-linejoin="round"/>
<polygon points="360.4,156.4 370.9,157.1 372.7,156.4 362.1,155.7" fill="#2c2c2c" stroke="#2c2c2c" stroke-width="0.5" stroke-linejoin="round"/>
<polygon points="206.9,144.2 214.9,144.7 216.7,144.2 208.7,143.7" fill="#333333" stroke="#333333" stroke-width="0.5" stroke-linejoin="round"/>
<polygon points="326.0,152.9 334.0,153.4 335.4,152.9 327.5,152.4" fill="#2c2c2c" stroke="#2c2c2c" stroke-width="0.5" stroke-linejoin="round"/>
<polygon points="381.0,155.0 389.3,155.5 390.7,154.9 382.5,154.4" fill="#4a4a4a" stroke="#4a4a4a" stroke-width="0.5" stroke-linejoin="round"/>
<polygon points="210.7,143.1 214.9,143.4 217.6,142.6 213.4,142.4" fill="#4a4a4a" stroke="#4a4a4a" stroke-width="0.5" stroke-linejoin="round"/>
<polygon points="236.3,147.6 240.6,147.8 243.3,147.0 238.9,146.8" fill="#3d3d3d" stroke="#3d3d3d" stroke-width="0.5" stroke-linejoin="round"/>
<polygon points="328.4,148.2 333.2,148.5 335.6,147.6 330.8,147.4" fill="#3d3d3d" stroke="#3d3d3d" stroke-width="0.5" stroke-linejoin="round"/>
<polygon points="262.2,141.0 270.1,141.5 273.1,140.5 265.2,140.1" fill="#4a4a4a" stroke="#4a4a4a" stroke-width="0.5" stroke-linejoin="round"/>
<polygon points="229.3,141.6 235.7,142.0 237.3,141.5 230.9,141.1" fill="#2c2c2c" stroke="#2c2c2c" stroke-width="0.5" stroke-linejoin="round"/>
<polygon points="202.1,145.5 208.1,145.9 210.1,145.3 204.1,145.0" fill="#4a4a4a" stroke="#4a4a4a" stroke-width="0.5" stroke-linejoin="round"/>
<polygon points="259.3,150.1 267.1,150.6 268.6,150.1 260.9,149.6" fill="#333333" stroke="#333333" stroke-width="0.5" stroke-linejoin="round"/>
<polygon points="296.5,144.6 304.6,145.1 306.1,144.6 298.0,144.1" fill="#4a4a4a" stroke="#4a4a4a" stroke-width="0.5" stroke-linejoin="round"/>
<polygon points="217.3,141.7 221.7,142.0 223.7,141.4 219.3,141.2" fill="#3d3d3d" stroke="#3d3d3d" stroke-width="0.5" stroke-linejoin="round"/>
<polygon points="379.8,149.3 386.0,149.6 388.5,148.7 382.3,148.3" fill="#3d3d3d" stroke="#3d3d3d" stroke-width="0.5" stroke-linejoin="round"/>
<polygon points="405.0,154.7 416.2,155.4 418.3,154.5 407.1,153.8" fill="#333333" stroke="#333333" stroke-width="0.5" stroke-linejoin="round"/>
<polygon points="268.7,150.0 271.4,150.2 273.2,149.6 270.5,149.4" fill="#2c2c2c" stroke="#2c2c2c" stroke-width="0.5" stroke-linejoin="round"/>
<polygon points="450.2,151.7 460.0,152.2 461.6,151.4 451.8,150.9" fill="#4a4a4a" stroke="#4a4a4a" stroke-width="0.5" stroke-linejoin="round"/>
<polygon points="397.1,154.3 404.5,154.8 405.9,154.2 398.5,153.7" fill="#333333" stroke="#333333" stroke-width="0.5" stroke-linejoin="round"/>
<polygon points="207.9,139.0 215.3,139.4 217.7,138.8 210.3,138.3" fill="#3d3d3d" stroke="#3d3d3d" stroke-width="0.5" stroke-linejoin="round"/>
<polygon points="274.8,143.2 282.5,143.6 285.2,142.8 277.5,142.4" fill="#2c2c2c" stroke="#2c2c2c" stroke-width="0.5" stroke-linejoin="round"/>
<polygon points="468.1,159.3 481.7,160.1 483.8,159.0 470.3,158.2" fill="#4a4a4a" stroke="#4a4a4a" stroke-width="0.5" stroke-linejoin="round"/>
<polygon points="364.2,146.9 368.0,147.1 370.3,146.2 366.6,146.0" fill="#3d3d3d" stroke="#3d3d3d" stroke-width="0.5" stroke-linejoin="round"/>
<polygon points="323.8,154.2 332.6,154.8 335.1,153.9 326.3,153.3" fill="#2c2c2c" stroke="#2c2c2c" stroke-width="0.5" stroke-linejoin="round"/>
<polygon points="449.8,154.2 460.0,154.8 461.4,154.1 451.2,153.6" fill="#3d3d3d" stroke="#3d3d3d" stroke-width="0.5" stroke-linejoin="round"/>
<polygon points="475.5,155.4 486.5,156.0 487.8,155.3 476.8,154.7" fill="#333333" stroke="#333333" stroke-width="0.5" stroke-linejoin="round"/>
<polygon points="330.1,148.4 338.7,148.9 340.5,148.3 332.0,147.8" fill="#4a4a4a" stroke="#4a4a4a" stroke-width="0.5" stroke-linejoin="round"/>
<polygon points="348.8,147.7 354.9,148.1 356.3,147.6 350.1,147.2" fill="#3d3d3d" stroke="#3d3d3d" stroke-width="0.5" stroke-linejoin="round"/>
<polygon points="370.2,154.8 380.4,155.5 381.9,154.9 371.6,154.3" fill="#4a4a4a" stroke="#4a4a4a" stroke-width="0.5" stroke-linejoin="round"/>
<polygon points="320.5,150.1 323.7,150.2 325.5,149.6 322.4,149.4" fill="#4a4a4a" stroke="#4a4a4a" stroke-width="0.5" stroke-linejoin="round"/>
<polygon points="347.6,149.1 357.7,149.7 360.7,148.5 350.6,148.0" fill="#333333" stroke="#333333" stroke-width="0.5" stroke-linejoin="round"/>
<polygon points="259.8,145.1 262.8,145.3 264.8,144.6 261.9,144.5" fill="#2c2c2c" stroke="#2c2c2c" stroke-width="0.5" stroke-linejoin="round"/>
<polygon points="330.7,144.7 334.6,144.9 336.0,144.4 332.1,144.2" fill="#333333" stroke="#333333" stroke-width="0.5" stroke-linejoin="round"/>
<polygon points="288.5,148.5 294.3,148.9 297.1,147.9 291.4,147.6" fill="#333333" stroke="#333333" stroke-width="0.5" stroke-linejoin="round"/>
<polygon points="441.8,158.4 449.7,158.9 452.2,157.7 444.3,157.2" fill="#333333" stroke="#333333" stroke-width="0.5" stroke-linejoin="round"/>
<polygon points="213.2,142.8 220.3,143.2 222.3,142.6 215.2,142.2" fill="#4a4a4a" stroke="#4a4a4a" stroke-width="0.5" stroke-linejoin="round"/>
<polygon points="335.0,152.6 338.5,152.8 340.7,152.0 337.2,151.8" fill="#333333" stroke="#333333" stroke-width="0.5" stroke-linejoin="round"/>
<polygon points="342.5,150.4 347.4,150.6 350.0,149.7 345.1,149.4" fill="#3d3d3d" stroke="#3d3d3d" stroke-width="0.5" stroke-linejoin="round"/>
<polygon points="426.1,160.3 437.3,161.0 439.1,160.1 428.0,159.4" fill="#2c2c2c" stroke="#2c2c2c" stroke-width="0.5" stroke-linejoin="round"/>
<polygon points="362.4,148.7 370.2,149.1 372.2,148.3 364.5,147.9" fill="#2c2c2c" stroke="#2c2c2c" stroke-width="0.5" stroke-linejoin="round"/>
<polygon points="365.8,154.2 376.0,154.9 378.0,154.1 367.8,153.4" fill="#333333" stroke="#333333" stroke-width="0.5" stroke-linejoin="round"/>
<polygon points="309.8,148.4 314.9,148.7 316.4,148.2 311.2,147.9" fill="#2c2c2c" stroke="#2c2c2c" stroke-width="0.5" stroke-linejoin="round"/>
<polygon points="346.1,155.5 350.1,155.7 352.2,154.9 348.1,154.7" fill="#3d3d3d" stroke="#3d3d3d" stroke-width="0.5" stroke-linejoin="round"/>
<polygon points="336.1,152.8 342.5,153.2 344.6,152.4 338.2,152.1" fill="#3d3d3d" stroke="#3d3d3d" stroke-width="0.5" stroke-linejoin="round"/>
<polygon points="364.3,155.3 376.1,156.1 377.9,155.3 366.1,154.6" fill="#333333" stroke="#333333" stroke-width="0.5" stroke-linejoin="round"/>
<polygon points="222.2,140.7 227.1,141.0 229.4,140.4 224.4,140.1" fill="#3d3d3d" stroke="#3d3d3d" stroke-width="0.5" stroke-linejoin="round"/>
<polygon points="417.2,150.1 424.6,150.5 426.4,149.7 419.1,149.3" fill="#4a4a4a" stroke="#4a4a4a" stroke-width="0.5" stroke-linejoin="round"/>
<polygon points="302.5,148.2 308.9,148.6 310.3,148.1 303.9,147.7" fill="#333333" stroke="#333333" stroke-width="0.5" stroke-linejoin="round"/>
<polygon points="274.1,150.8 284.1,151.5 285.6,151.0 275.7,150.4" fill="#333333" stroke="#333333" stroke-width="0.5" stroke-linejoin="round"/>
<polygon points="298.9,143.9 304.3,144.2 306.1,143.6 300.7,143.3" fill="#3d3d3d" stroke="#3d3d3d" stroke-width="0.5" stroke-linejoin="round"/>
<polygon points="255.2,145.0 262.9,145.4 265.9,144.5 258.2,144.1" fill="#3d3d3d" stroke="#3d3d3d" stroke-width="0.5" stroke-linejoin="round"/>
<polygon points="332.8,146.2 342.3,146.7 344.7,145.9 335.3,145.4" fill="#4a4a4a" stroke="#4a4a4a" stroke-width="0.5" stroke-linejoin="round"/>
<polygon points="463.4,161.8 469.5,162.2 471.2,161.3 465.1,160.9" fill="#2c2c2c" stroke="#2c2c2c" stroke-width="0.5" stroke-linejoin="round"/>
<polygon points="425.1,150.7 430.1,151.0 432.5,149.9 427.5,149.6" fill="#3d3d3d" stroke="#3d3d3d" stroke-width="0.5" stroke-linejoin="round"/>
<polygon points="387.0,153.2 394.9,153.7 396.3,153.1 388.4,152.7" fill="#333333" stroke="#333333" stroke-width="0.5" stroke-linejoin="round"/>
<polygon points="410.4,153.3 415.3,153.6 417.1,152.8 412.3,152.5" fill="#3d3d3d" stroke="#3d3d3d" stroke-width="0.5" stroke-linejoin="round"/>
<polygon points="342.7,150.1 349.7,150.6 352.0,149.7 345.0,149.3" fill="#4a4a4a" stroke="#4a4a4a" stroke-width="0.5" stroke-linejoin="round"/>
<polygon points="334.5,146.8 341.8,147.2 344.8,146.2 337.5,145.8" fill="#2c2c2c" stroke="#2c2c2c" stroke-width="0.5" stroke-linejoin="round"/>
<polygon points="401.3,155.3 410.1,155.8 412.4,154.8 403.7,154.3" fill="#333333" stroke="#333333" stroke-width="0.5" stroke-linejoin="round"/>
<polygon points="344.4,151.9 352.2,152.4 354.9,151.4 347.2,150.9" fill="#4a4a4a" stroke="#4a4a4a" stroke-width="0.5" stroke-linejoin="round"/>
<polygon points="346.3,146.1 351.2,146.3 353.8,145.4 348.8,145.1" fill="#2c2c2c" stroke="#2c2c2c" stroke-width="0.5" stroke-linejoin="round"/>
<polygon points="466.7,160.0 474.0,160.5 476.3,159.2 469.1,158.8" fill="#333333" stroke="#333333" stroke-width="0.5" stroke-linejoin="round"/>
<polygon points="411.1,159.1 415.6,159.4 417.4,158.6 413.0,158.3" fill="#4a4a4a" stroke="#4a4a4a" stroke-width="0.5" stroke-linejoin="round"/>
<polygon points="385.4,156.5 394.5,157.0 397.4,155.8 388.2,155.3" fill="#3d3d3d" stroke="#3d3d3d" stroke-width="0.5" stroke-linejoin="round"/>
<polygon points="313.4,152.7 321.7,153.3 324.2,152.4 315.9,151.9" fill="#3d3d3d" stroke="#3d3d3d" stroke-width="0.5" stroke-linejoin="round"/>
<polygon points="376.3,149.1 386.1,149.6 387.5,149.1 377.6,148.5" fill="#333333" stroke="#333333" stroke-width="0.5" stroke-linejoin="round"/>
<polygon points="353.8,151.9 358.3,152.2 360.8,151.2 356.3,150.9" fill="#4a4a4a" stroke="#4a4a4a" stroke-width="0.5" stroke-linejoin="round"/>
<polygon points="265.0,141.8 269.4,142.1 271.3,141.5 266.9,141.2" fill="#3d3d3d" stroke="#3d3d3d" stroke-width="0.5" stroke-linejoin="round"/>
<polygon points="348.8,155.9 352.7,156.1 355.1,155.2 351.2,154.9" fill="#333333" stroke="#333333" stroke-width="0.5" stroke-linejoin="round"/>
<polygon points="315.5,145.8 320.7,146.1 322.1,145.6 317.0,145.3" fill="#4a4a4a" stroke="#4a4a4a" stroke-width="0.5" stroke-linejoin="round"/>
<polygon points="350.9,150.6 354.4,150.8 356.0,150.2 352.6,150.0" fill="#4a4a4a" stroke="#4a4a4a" stroke-width="0.5" stroke-linejoin="round"/>
<polygon points="445.3,159.6 455.9,160.3 458.4,159.0 447.8,158.3" fill="#4a4a4a" stroke="#4a4a4a" stroke-width="0.5" stroke-linejoin="round"/>
<polygon points="186.8,139.5 189.4,139.7 191.6,139.1 188.9,139.0" fill="#3d3d3d" stroke="#3d3d3d" stroke-width="0.5" stroke-linejoin="round"/>
<polygon points="212.7,140.2 219.4,140.6 222.5,139.8 215.8,139.4" fill="#333333" stroke="#333333" stroke-width="0.5" stroke-linejoin="round"/>
<polygon points="459.6,152.0 469.2,152.5 471.6,151.3 462.1,150.7" fill="#2c2c2c" stroke="#2c2c2c" stroke-width="0.5" stroke-linejoin="round"/>
<polygon points="335.4,151.7 339.6,152.0 342.6,150.9 338.4,150.6" fill="#2c2c2c" stroke="#2c2c2c" stroke-width="0.5" stroke-linejoin="round"/>
<polygon points="294.8,143.1 300.7,143.4 302.0,143.0 296.2,142.7" fill="#3d3d3d" stroke="#3d3d3d" stroke-width="0.5" stroke-linejoin="round"/>
<polygon points="388.2,154.7 398.1,155.4 400.2,154.5 390.3,153.9" fill="#3d3d3d" stroke="#3d3d3d" stroke-width="0.5" stroke-linejoin="round"/>
<polygon points="331.3,146.4 342.0,147.0 344.7,146.1 334.0,145.5" fill="#333333" stroke="#333333" stroke-width="0.5" stroke-linejoin="round"/>
<polygon points="270.2,148.1 276.4,148.5 279.2,147.6 273.1,147.2" fill="#2c2c2c" stroke="#2c2c2c" stroke-width="0.5" stroke-linejoin="round"/>
<polygon points="248.5,146.3 256.8,146.8 259.3,146.1 251.0,145.6" fill="#2c2c2c" stroke="#2c2c2c" stroke-width="0.5" stroke-linejoin="round"/>
<polygon points="383.0,150.3 387.2,150.5 390.1,149.4 385.9,149.1" fill="#4a4a4a" stroke="#4a4a4a" stroke-width="0.5" stroke-linejoin="round"/>
<polygon points="309.3,151.7 318.8,152.3 321.8,151.2 312.4,150.6" fill="#333333" stroke="#333333" stroke-width="0.5" stroke-linejoin="round"/>
<polygon points="238.8,149.1 246.6,149.6 248.8,148.9 241.1,148.4" fill="#2c2c2c" stroke="#2c2c2c" stroke-width="0.5" stroke-linejoin="round"/>
<polygon points="429.0,154.7 441.7,155.4 444.2,154.2 431.6,153.5" fill="#2c2c2c" stroke="#2c2c2c" stroke-width="0.5" stroke-linejoin="round"/>
<polygon points="357.4,151.8 364.4,152.2 365.8,151.6 358.9,151.2" fill="#3d3d3d" stroke="#3d3d3d" stroke-width="0.5" stroke-linejoin="round"/>
<polygon points="418.2,155.1 421.6,155.3 423.0,154.6 419.6,154.4" fill="#4a4a4a" stroke="#4a4a4a" stroke-width="0.5" stroke-linejoin="round"/>
<polygon points="459.5,155.3 469.2,155.9 471.2,154.9 461.5,154.3" fill="#333333" stroke="#333333" stroke-width="0.5" stroke-linejoin="round"/>
<polygon points="476.3,155.0 484.0,155.5 486.3,154.2 478.6,153.8" fill="#4a4a4a" stroke="#4a4a4a" stroke-width="0.5" stroke-linejoin="round"/>
<polygon points="287.8,142.2 295.7,142.6 298.7,141.7 290.8,141.2" fill="#333333" stroke="#333333" stroke-width="0.5" stroke-linejoin="round"/>
<polygon points="359.9,156.0 366.2,156.4 368.2,155.6 362.0,155.2" fill="#333333" stroke="#333333" stroke-width="0.5" stroke-linejoin="round"/>
<polygon points="454.4,157.3 460.7,157.6 462.8,156.5 456.5,156.2" fill="#2c2c2c" stroke="#2c2c2c" stroke-width="0.5" stroke-linejoin="round"/>
<line x1="422.5" y1="151.1" x2="422.5" y2="142.1" stroke="#333" stroke-width="1.60"/>
<line x1="469.3" y1="158.7" x2="469.3" y2="151.7" stroke="#333" stroke-width="1.60"/>
<line x1="202.0" y1="131.0" x2="521.0" y2="146.0" stroke="#2e2e2b" stroke-width="1.00"/>
<line x1="143.0" y1="146.0" x2="202.0" y2="131.0" stroke="#2e2e2b" stroke-width="1.00"/>
<line x1="481.0" y1="169.0" x2="521.0" y2="146.0" stroke="#2e2e2b" stroke-width="1.00"/>
<polygon points="253.7,154.0 258.3,154.4 289.4,313.4 285.0,312.4" fill="#eae0b8"/>
<polygon points="485.0,225.0 494.0,225.0 523.0,195.0 595.0,201.0 595.0,204.5 631.4,207.5 631.4,205.3 749.6,215.8 740.5,253.4" fill="#03ad03"/>
<polygon points="523.0,195.0 595.0,201.0 595.0,208.0 521.0,202.0" fill="#053005"/>
<line x1="523.0" y1="195.0" x2="595.0" y2="201.0" stroke="#62dc62" stroke-width="0.80"/>
<line x1="595.0" y1="201.0" x2="595.0" y2="208.0" stroke="#62dc62" stroke-width="0.60"/>
<polygon points="595.0,204.5 631.4,207.5 626.0,212.0 596.0,209.5" fill="#053005"/>
<line x1="595.0" y1="204.5" x2="631.4" y2="207.5" stroke="#62dc62" stroke-width="0.60"/>
<polygon points="631.4,205.3 749.6,215.8 745.0,223.0 631.4,213.0" fill="#053005"/>
<line x1="631.4" y1="205.3" x2="749.6" y2="215.8" stroke="#62dc62" stroke-width="0.80"/>
<line x1="631.4" y1="205.3" x2="631.4" y2="214.0" stroke="#62dc62" stroke-width="0.80"/>
<polygon points="511.0,203.0 525.0,203.5 525.0,208.5 511.0,208.0" fill="#03ad03"/>
<line x1="511.0" y1="203.0" x2="525.0" y2="203.5" stroke="#62dc62" stroke-width="0.70"/>
<polygon points="497.0,213.0 510.0,213.5 510.0,218.5 497.0,218.0" fill="#03ad03"/>
<line x1="497.0" y1="213.0" x2="510.0" y2="213.5" stroke="#62dc62" stroke-width="0.70"/>
<line x1="494.0" y1="225.0" x2="523.0" y2="195.0" stroke="#62dc62" stroke-width="0.60"/>
<polygon points="588.0,206.0 608.0,207.5 608.0,224.0 588.0,222.5" fill="#03ad03"/>
<polygon points="590.0,207.5 605.0,208.7 605.0,211.5 590.0,210.3" fill="#053005"/>
<polygon points="589.0,216.0 606.0,217.4 606.0,221.8 589.0,220.4" fill="#053005"/>
<polygon points="588,206 608,207.5 608,224 588,222.5" fill="none" stroke="#62dc62" stroke-width="0.6"/>
<polygon points="626.0,210.0 632.0,210.5 632.0,224.0 626.0,223.5" fill="#053005"/>
<line x1="626.0" y1="210.0" x2="626.0" y2="223.5" stroke="#62dc62" stroke-width="0.60"/>
<polygon points="527.0,206.0 535.0,206.7 535.0,210.7 527.0,210.0" fill="none" stroke="#62dc62" stroke-width="0.6"/>
<polygon points="553.0,211.0 562.0,211.8 562.0,216.8 553.0,216.0" fill="none" stroke="#62dc62" stroke-width="0.6"/>
<polygon points="541.0,218.0 548.0,218.6 548.0,221.6 541.0,221.0" fill="none" stroke="#62dc62" stroke-width="0.6"/>
<polygon points="560.0,214.0 566.0,214.5 566.0,217.5 560.0,217.0" fill="none" stroke="#62dc62" stroke-width="0.6"/>
<polygon points="502.0,220.0 508.0,220.5 508.0,223.5 502.0,223.0" fill="none" stroke="#62dc62" stroke-width="0.6"/>
<polygon points="518.0,220.0 522.0,220.4 522.0,223.4 518.0,223.0" fill="none" stroke="#62dc62" stroke-width="0.6"/>
<polygon points="570.0,222.0 576.0,222.5 576.0,226.5 570.0,226.0" fill="none" stroke="#62dc62" stroke-width="0.6"/>
<polygon points="575.0,228.0 580.0,228.4 580.0,231.4 575.0,231.0" fill="none" stroke="#62dc62" stroke-width="0.6"/>
<polygon points="600.0,228.0 610.0,228.9 610.0,232.9 600.0,232.0" fill="none" stroke="#62dc62" stroke-width="0.6"/>
<polygon points="612.0,229.0 618.0,229.5 618.0,232.5 612.0,232.0" fill="none" stroke="#62dc62" stroke-width="0.6"/>
<polygon points="577.0,203.0 587.0,203.9 587.0,208.9 577.0,208.0" fill="none" stroke="#62dc62" stroke-width="0.6"/>
<polygon points="648.0,217.0 682.0,220.0 682.0,225.0 648.0,222.0" fill="none" stroke="#62dc62" stroke-width="0.6"/>
<polygon points="652.0,228.0 678.0,230.3 678.0,240.3 652.0,238.0" fill="none" stroke="#62dc62" stroke-width="0.6"/>
<polygon points="665.0,220.0 669.0,220.4 669.0,236.4 665.0,236.0" fill="none" stroke="#62dc62" stroke-width="0.6"/>
<polygon points="694.0,226.0 707.0,227.1 707.0,233.1 694.0,232.0" fill="none" stroke="#62dc62" stroke-width="0.6"/>
<polygon points="695.0,236.0 703.0,236.7 703.0,239.7 695.0,239.0" fill="none" stroke="#62dc62" stroke-width="0.6"/>
<polygon points="727.0,231.0 740.0,232.1 740.0,238.1 727.0,237.0" fill="none" stroke="#62dc62" stroke-width="0.6"/>
<polygon points="728.0,240.0 738.0,240.9 738.0,244.9 728.0,244.0" fill="none" stroke="#62dc62" stroke-width="0.6"/>
<polygon points="714.0,238.0 718.0,238.4 718.0,241.4 714.0,241.0" fill="none" stroke="#62dc62" stroke-width="0.6"/>
<polygon points="540.0,226.0 546.0,226.5 546.0,229.5 540.0,229.0" fill="none" stroke="#62dc62" stroke-width="0.6"/>
<polygon points="556.0,230.0 561.0,230.4 561.0,233.4 556.0,233.0" fill="none" stroke="#62dc62" stroke-width="0.6"/>
<polygon points="485.7,237.3 505.7,239.3 510.9,366.6 492.1,363.0" fill="#eae0b8"/>
<polygon points="505.8,241.0 738.0,264.5 725.2,408.0 510.9,366.6" fill="#06a506"/>
<polygon points="486.5,253.9 505.8,241.4 506.4,256.1" fill="#06a506"/>
<line x1="486.5" y1="253.9" x2="506.4" y2="256.1" stroke="#0b5a0b" stroke-width="1.00"/>
<polygon points="487.4,270.1 506.5,258.1 507.1,272.5" fill="#06a506"/>
<line x1="487.4" y1="270.1" x2="507.1" y2="272.5" stroke="#0b5a0b" stroke-width="1.00"/>
<polygon points="488.2,286.0 507.1,274.5 507.7,288.7" fill="#06a506"/>
<line x1="488.2" y1="286.0" x2="507.7" y2="288.7" stroke="#0b5a0b" stroke-width="1.00"/>
<polygon points="489.0,301.6 507.8,290.6 508.4,304.5" fill="#06a506"/>
<line x1="489.0" y1="301.6" x2="508.4" y2="304.5" stroke="#0b5a0b" stroke-width="1.00"/>
<polygon points="489.8,317.0 508.4,306.4 509.0,320.1" fill="#06a506"/>
<line x1="489.8" y1="317.0" x2="509.0" y2="320.1" stroke="#0b5a0b" stroke-width="1.00"/>
<polygon points="490.5,332.1 509.1,321.9 509.6,335.4" fill="#06a506"/>
<line x1="490.5" y1="332.1" x2="509.6" y2="335.4" stroke="#0b5a0b" stroke-width="1.00"/>
<polygon points="491.3,347.0 509.7,337.2 510.2,350.4" fill="#06a506"/>
<line x1="491.3" y1="347.0" x2="510.2" y2="350.4" stroke="#0b5a0b" stroke-width="1.00"/>
<polygon points="492.1,361.6 510.3,352.2 510.8,365.2" fill="#06a506"/>
<line x1="492.1" y1="361.6" x2="510.8" y2="365.2" stroke="#0b5a0b" stroke-width="1.00"/>
<polygon points="492.1,363.0 725.2,408.0 723.0,435.2 493.0,380.0" fill="#fbfdfe"/>
<polygon points="490.3,363.0 493.9,363.0 493.3,379.8 489.7,379.8" fill="#22c422"/>
<line x1="490.8" y1="363.0" x2="490.2" y2="379.8" stroke="#0a7a0a" stroke-width="0.50"/>
<polygon points="509.1,366.6 512.7,366.6 512.1,384.3 508.5,384.3" fill="#22c422"/>
<line x1="509.6" y1="366.6" x2="509.0" y2="384.3" stroke="#0a7a0a" stroke-width="0.50"/>
<polygon points="526.0,369.9 529.6,369.9 529.0,388.4 525.4,388.4" fill="#22c422"/>
<line x1="526.5" y1="369.9" x2="525.9" y2="388.4" stroke="#0a7a0a" stroke-width="0.50"/>
<polygon points="548.6,374.2 552.2,374.2 551.6,393.8 548.0,393.8" fill="#22c422"/>
<line x1="549.1" y1="374.2" x2="548.5" y2="393.8" stroke="#0a7a0a" stroke-width="0.50"/>
<polygon points="588.7,382.0 592.3,382.0 591.7,403.4 588.1,403.4" fill="#22c422"/>
<line x1="589.2" y1="382.0" x2="588.6" y2="403.4" stroke="#0a7a0a" stroke-width="0.50"/>
<polygon points="610.1,386.1 613.7,386.1 613.1,408.6 609.5,408.6" fill="#22c422"/>
<line x1="610.6" y1="386.1" x2="610.0" y2="408.6" stroke="#0a7a0a" stroke-width="0.50"/>
<polygon points="632.3,390.4 635.9,390.4 635.3,413.9 631.7,413.9" fill="#22c422"/>
<line x1="632.8" y1="390.4" x2="632.2" y2="413.9" stroke="#0a7a0a" stroke-width="0.50"/>
<polygon points="653.5,394.5 657.1,394.5 656.5,419.0 652.9,419.0" fill="#22c422"/>
<line x1="654.0" y1="394.5" x2="653.4" y2="419.0" stroke="#0a7a0a" stroke-width="0.50"/>
<polygon points="674.7,398.6 678.3,398.6 677.7,424.1 674.1,424.1" fill="#22c422"/>
<line x1="675.2" y1="398.6" x2="674.6" y2="424.1" stroke="#0a7a0a" stroke-width="0.50"/>
<polygon points="699.4,403.4 703.0,403.4 702.4,430.0 698.8,430.0" fill="#22c422"/>
<line x1="699.9" y1="403.4" x2="699.3" y2="430.0" stroke="#0a7a0a" stroke-width="0.50"/>
<polygon points="723.4,408.0 727.0,408.0 726.4,435.8 722.8,435.8" fill="#22c422"/>
<line x1="723.9" y1="408.0" x2="723.3" y2="435.8" stroke="#0a7a0a" stroke-width="0.50"/>
<line x1="505.8" y1="241.0" x2="510.9" y2="366.6" stroke="#0a5a0a" stroke-width="0.90"/>
<line x1="507.3" y1="241.2" x2="512.3" y2="366.9" stroke="#5ee05e" stroke-width="0.55"/>
<line x1="504.3" y1="240.9" x2="509.4" y2="366.3" stroke="#5ee05e" stroke-width="0.45"/>
<line x1="524.0" y1="242.9" x2="527.8" y2="369.9" stroke="#0a5a0a" stroke-width="0.90"/>
<line x1="525.5" y1="243.0" x2="529.3" y2="370.2" stroke="#5ee05e" stroke-width="0.55"/>
<line x1="522.4" y1="242.7" x2="526.3" y2="369.6" stroke="#5ee05e" stroke-width="0.45"/>
<line x1="548.2" y1="245.3" x2="550.4" y2="374.2" stroke="#0a5a0a" stroke-width="0.90"/>
<line x1="549.8" y1="245.5" x2="551.9" y2="374.5" stroke="#5ee05e" stroke-width="0.55"/>
<line x1="546.5" y1="245.1" x2="548.8" y2="373.9" stroke="#5ee05e" stroke-width="0.45"/>
<line x1="570.4" y1="247.6" x2="571.0" y2="378.2" stroke="#0a5a0a" stroke-width="0.90"/>
<line x1="572.0" y1="247.7" x2="572.5" y2="378.5" stroke="#5ee05e" stroke-width="0.55"/>
<line x1="568.7" y1="247.4" x2="569.4" y2="377.9" stroke="#5ee05e" stroke-width="0.45"/>
<line x1="591.4" y1="249.7" x2="590.5" y2="382.0" stroke="#0a5a0a" stroke-width="0.90"/>
<line x1="593.1" y1="249.9" x2="592.1" y2="382.3" stroke="#5ee05e" stroke-width="0.55"/>
<line x1="589.7" y1="249.5" x2="588.9" y2="381.7" stroke="#5ee05e" stroke-width="0.45"/>
<line x1="614.5" y1="252.0" x2="611.9" y2="386.1" stroke="#0a5a0a" stroke-width="0.90"/>
<line x1="616.3" y1="252.2" x2="613.5" y2="386.4" stroke="#5ee05e" stroke-width="0.55"/>
<line x1="612.8" y1="251.8" x2="610.2" y2="385.8" stroke="#5ee05e" stroke-width="0.45"/>
<line x1="638.6" y1="254.5" x2="634.1" y2="390.4" stroke="#0a5a0a" stroke-width="0.90"/>
<line x1="640.5" y1="254.6" x2="635.8" y2="390.7" stroke="#5ee05e" stroke-width="0.55"/>
<line x1="636.8" y1="254.3" x2="632.4" y2="390.1" stroke="#5ee05e" stroke-width="0.45"/>
<line x1="661.7" y1="256.8" x2="655.3" y2="394.5" stroke="#0a5a0a" stroke-width="0.90"/>
<line x1="663.6" y1="257.0" x2="657.1" y2="394.8" stroke="#5ee05e" stroke-width="0.55"/>
<line x1="659.8" y1="256.6" x2="653.6" y2="394.2" stroke="#5ee05e" stroke-width="0.45"/>
<line x1="684.7" y1="259.1" x2="676.5" y2="398.6" stroke="#0a5a0a" stroke-width="0.90"/>
<line x1="686.6" y1="259.3" x2="678.3" y2="398.9" stroke="#5ee05e" stroke-width="0.55"/>
<line x1="682.7" y1="258.9" x2="674.7" y2="398.2" stroke="#5ee05e" stroke-width="0.45"/>
<line x1="711.7" y1="261.8" x2="701.2" y2="403.4" stroke="#0a5a0a" stroke-width="0.90"/>
<line x1="713.8" y1="262.1" x2="703.1" y2="403.7" stroke="#5ee05e" stroke-width="0.55"/>
<line x1="709.7" y1="261.6" x2="699.4" y2="403.0" stroke="#5ee05e" stroke-width="0.45"/>
<line x1="738.0" y1="264.5" x2="725.2" y2="408.0" stroke="#0a5a0a" stroke-width="0.90"/>
<line x1="740.1" y1="264.7" x2="727.1" y2="408.4" stroke="#5ee05e" stroke-width="0.55"/>
<line x1="735.9" y1="264.3" x2="723.3" y2="407.6" stroke="#5ee05e" stroke-width="0.45"/>
<polygon points="508.6,246.0 521.4,247.3 521.8,258.6 509.0,257.2" fill="none" stroke="#48cc48" stroke-width="0.4"/>
<polygon points="509.3,262.7 522.0,264.1 522.3,275.2 509.7,273.7" fill="none" stroke="#48cc48" stroke-width="0.4"/>
<polygon points="509.9,279.0 522.5,280.6 522.8,291.5 510.3,289.8" fill="none" stroke="#48cc48" stroke-width="0.4"/>
<polygon points="510.5,295.1 523.0,296.8 523.3,307.5 510.9,305.7" fill="none" stroke="#48cc48" stroke-width="0.4"/>
<polygon points="511.1,310.8 523.5,312.7 523.8,323.2 511.5,321.2" fill="none" stroke="#48cc48" stroke-width="0.4"/>
<polygon points="511.7,326.3 524.0,328.3 524.3,338.6 512.1,336.5" fill="none" stroke="#48cc48" stroke-width="0.4"/>
<polygon points="512.3,341.5 524.5,343.7 524.8,353.8 512.7,351.6" fill="none" stroke="#48cc48" stroke-width="0.4"/>
<polygon points="512.9,356.5 525.0,358.7 525.3,368.7 513.3,366.4" fill="none" stroke="#48cc48" stroke-width="0.4"/>
<polygon points="526.8,247.9 545.5,249.9 545.7,261.3 527.1,259.2" fill="none" stroke="#48cc48" stroke-width="0.4"/>
<polygon points="527.3,264.8 545.8,266.9 546.0,278.2 527.6,275.9" fill="none" stroke="#48cc48" stroke-width="0.4"/>
<polygon points="527.8,281.3 546.1,283.7 546.3,294.7 528.1,292.2" fill="none" stroke="#48cc48" stroke-width="0.4"/>
<polygon points="528.2,297.6 546.4,300.1 546.6,311.0 528.5,308.3" fill="none" stroke="#48cc48" stroke-width="0.4"/>
<polygon points="528.7,313.5 546.7,316.2 546.9,326.9 529.0,324.0" fill="none" stroke="#48cc48" stroke-width="0.4"/>
<polygon points="529.1,329.2 547.0,332.1 547.2,342.5 529.4,339.5" fill="none" stroke="#48cc48" stroke-width="0.4"/>
<polygon points="529.6,344.5 547.3,347.6 547.5,357.9 529.9,354.7" fill="none" stroke="#48cc48" stroke-width="0.4"/>
<polygon points="530.0,359.7 547.6,362.9 547.8,373.0 530.3,369.6" fill="none" stroke="#48cc48" stroke-width="0.4"/>
<polygon points="551.0,250.4 567.5,252.2 567.6,263.8 551.2,262.0" fill="none" stroke="#48cc48" stroke-width="0.4"/>
<polygon points="551.3,267.6 567.6,269.5 567.7,280.9 551.5,278.9" fill="none" stroke="#48cc48" stroke-width="0.4"/>
<polygon points="551.6,284.4 567.7,286.5 567.8,297.7 551.7,295.5" fill="none" stroke="#48cc48" stroke-width="0.4"/>
<polygon points="551.8,300.9 567.8,303.1 567.9,314.1 552.0,311.8" fill="none" stroke="#48cc48" stroke-width="0.4"/>
<polygon points="552.1,317.1 567.9,319.5 568.0,330.3 552.2,327.7" fill="none" stroke="#48cc48" stroke-width="0.4"/>
<polygon points="552.3,333.0 568.0,335.5 568.1,346.1 552.5,343.4" fill="none" stroke="#48cc48" stroke-width="0.4"/>
<polygon points="552.5,348.6 568.1,351.3 568.2,361.7 552.7,358.9" fill="none" stroke="#48cc48" stroke-width="0.4"/>
<polygon points="552.8,363.9 568.2,366.7 568.3,377.0 552.9,374.0" fill="none" stroke="#48cc48" stroke-width="0.4"/>
<polygon points="573.3,252.8 588.4,254.4 588.4,266.1 573.3,264.4" fill="none" stroke="#48cc48" stroke-width="0.4"/>
<polygon points="573.3,270.1 588.3,271.9 588.3,283.5 573.4,281.6" fill="none" stroke="#48cc48" stroke-width="0.4"/>
<polygon points="573.4,287.2 588.2,289.1 588.2,300.4 573.4,298.4" fill="none" stroke="#48cc48" stroke-width="0.4"/>
<polygon points="573.4,303.9 588.2,306.0 588.1,317.1 573.5,314.9" fill="none" stroke="#48cc48" stroke-width="0.4"/>
<polygon points="573.5,320.3 588.1,322.5 588.0,333.5 573.5,331.1" fill="none" stroke="#48cc48" stroke-width="0.4"/>
<polygon points="573.5,336.4 588.0,338.8 587.9,349.5 573.6,347.0" fill="none" stroke="#48cc48" stroke-width="0.4"/>
<polygon points="573.6,352.2 587.9,354.7 587.8,365.2 573.6,362.7" fill="none" stroke="#48cc48" stroke-width="0.4"/>
<polygon points="573.6,367.7 587.8,370.4 587.8,380.7 573.7,378.0" fill="none" stroke="#48cc48" stroke-width="0.4"/>
<polygon points="594.3,255.0 611.4,256.8 611.2,268.7 594.2,266.8" fill="none" stroke="#48cc48" stroke-width="0.4"/>
<polygon points="594.2,272.6 611.1,274.6 610.9,286.3 594.1,284.2" fill="none" stroke="#48cc48" stroke-width="0.4"/>
<polygon points="594.0,289.8 610.8,292.0 610.5,303.5 593.9,301.2" fill="none" stroke="#48cc48" stroke-width="0.4"/>
<polygon points="593.9,306.8 610.4,309.1 610.2,320.4 593.8,318.0" fill="none" stroke="#48cc48" stroke-width="0.4"/>
<polygon points="593.8,323.4 610.1,325.9 609.9,337.0 593.7,334.4" fill="none" stroke="#48cc48" stroke-width="0.4"/>
<polygon points="593.6,339.7 609.8,342.3 609.6,353.2 593.5,350.4" fill="none" stroke="#48cc48" stroke-width="0.4"/>
<polygon points="593.5,355.7 609.5,358.5 609.4,369.1 593.4,366.2" fill="none" stroke="#48cc48" stroke-width="0.4"/>
<polygon points="593.3,371.4 609.3,374.3 609.1,384.8 593.3,381.8" fill="none" stroke="#48cc48" stroke-width="0.4"/>
<polygon points="617.5,257.4 635.3,259.3 634.9,271.4 617.2,269.4" fill="none" stroke="#48cc48" stroke-width="0.4"/>
<polygon points="617.1,275.3 634.7,277.3 634.4,289.2 616.9,287.0" fill="none" stroke="#48cc48" stroke-width="0.4"/>
<polygon points="616.7,292.8 634.2,295.0 633.8,306.7 616.5,304.3" fill="none" stroke="#48cc48" stroke-width="0.4"/>
<polygon points="616.4,309.9 633.6,312.4 633.3,323.8 616.1,321.3" fill="none" stroke="#48cc48" stroke-width="0.4"/>
<polygon points="616.0,326.8 633.1,329.4 632.7,340.6 615.8,337.9" fill="none" stroke="#48cc48" stroke-width="0.4"/>
<polygon points="615.6,343.3 632.6,346.1 632.2,357.1 615.4,354.2" fill="none" stroke="#48cc48" stroke-width="0.4"/>
<polygon points="615.3,359.5 632.1,362.4 631.7,373.2 615.1,370.2" fill="none" stroke="#48cc48" stroke-width="0.4"/>
<polygon points="615.0,375.4 631.6,378.5 631.2,389.1 614.7,385.9" fill="none" stroke="#48cc48" stroke-width="0.4"/>
<polygon points="641.6,259.9 658.2,261.6 657.6,274.0 641.2,272.1" fill="none" stroke="#48cc48" stroke-width="0.4"/>
<polygon points="641.0,278.0 657.4,280.0 656.8,292.0 640.6,290.0" fill="none" stroke="#48cc48" stroke-width="0.4"/>
<polygon points="640.4,295.8 656.6,297.9 656.0,309.7 639.9,307.5" fill="none" stroke="#48cc48" stroke-width="0.4"/>
<polygon points="639.7,313.2 655.8,315.5 655.3,327.1 639.3,324.7" fill="none" stroke="#48cc48" stroke-width="0.4"/>
<polygon points="639.1,330.3 655.0,332.7 654.5,344.1 638.8,341.6" fill="none" stroke="#48cc48" stroke-width="0.4"/>
<polygon points="638.6,347.0 654.3,349.6 653.8,360.7 638.2,358.1" fill="none" stroke="#48cc48" stroke-width="0.4"/>
<polygon points="638.0,363.5 653.5,366.2 653.1,377.1 637.6,374.3" fill="none" stroke="#48cc48" stroke-width="0.4"/>
<polygon points="637.4,379.6 652.8,382.4 652.4,393.1 637.1,390.2" fill="none" stroke="#48cc48" stroke-width="0.4"/>
<polygon points="664.7,262.3 681.0,264.0 680.3,276.5 664.1,274.7" fill="none" stroke="#48cc48" stroke-width="0.4"/>
<polygon points="663.8,280.7 680.0,282.6 679.3,294.8 663.2,292.8" fill="none" stroke="#48cc48" stroke-width="0.4"/>
<polygon points="662.9,298.7 678.9,300.8 678.3,312.8 662.4,310.6" fill="none" stroke="#48cc48" stroke-width="0.4"/>
<polygon points="662.1,316.4 677.9,318.6 677.3,330.3 661.5,328.0" fill="none" stroke="#48cc48" stroke-width="0.4"/>
<polygon points="661.3,333.7 676.9,336.0 676.3,347.5 660.7,345.1" fill="none" stroke="#48cc48" stroke-width="0.4"/>
<polygon points="660.4,350.6 675.9,353.1 675.3,364.4 659.9,361.8" fill="none" stroke="#48cc48" stroke-width="0.4"/>
<polygon points="659.6,367.2 675.0,369.9 674.4,381.0 659.1,378.2" fill="none" stroke="#48cc48" stroke-width="0.4"/>
<polygon points="658.9,383.5 674.1,386.4 673.4,397.2 658.4,394.3" fill="none" stroke="#48cc48" stroke-width="0.4"/>
<polygon points="687.7,264.7 707.9,266.8 707.0,279.5 687.0,277.3" fill="none" stroke="#48cc48" stroke-width="0.4"/>
<polygon points="686.6,283.4 706.5,285.7 705.6,298.1 685.9,295.6" fill="none" stroke="#48cc48" stroke-width="0.4"/>
<polygon points="685.5,301.6 705.2,304.2 704.3,316.3 684.8,313.6" fill="none" stroke="#48cc48" stroke-width="0.4"/>
<polygon points="684.4,319.5 703.9,322.2 703.0,334.1 683.7,331.3" fill="none" stroke="#48cc48" stroke-width="0.4"/>
<polygon points="683.3,337.0 702.6,339.9 701.8,351.6 682.6,348.6" fill="none" stroke="#48cc48" stroke-width="0.4"/>
<polygon points="682.3,354.2 701.3,357.3 700.5,368.7 681.6,365.5" fill="none" stroke="#48cc48" stroke-width="0.4"/>
<polygon points="681.3,371.0 700.1,374.3 699.3,385.5 680.6,382.1" fill="none" stroke="#48cc48" stroke-width="0.4"/>
<polygon points="680.3,387.5 698.9,391.0 698.1,401.9 679.6,398.4" fill="none" stroke="#48cc48" stroke-width="0.4"/>
<polygon points="714.8,267.6 733.9,269.6 732.8,282.4 713.8,280.3" fill="none" stroke="#48cc48" stroke-width="0.4"/>
<polygon points="713.4,286.5 732.3,288.7 731.2,301.3 712.4,299.0" fill="none" stroke="#48cc48" stroke-width="0.4"/>
<polygon points="712.0,305.0 730.6,307.4 729.6,319.8 711.0,317.2" fill="none" stroke="#48cc48" stroke-width="0.4"/>
<polygon points="710.6,323.2 729.0,325.8 728.0,337.8 709.7,335.1" fill="none" stroke="#48cc48" stroke-width="0.4"/>
<polygon points="709.2,341.0 727.5,343.7 726.4,355.5 708.3,352.7" fill="none" stroke="#48cc48" stroke-width="0.4"/>
<polygon points="707.9,358.4 725.9,361.3 724.9,372.9 707.0,369.8" fill="none" stroke="#48cc48" stroke-width="0.4"/>
<polygon points="706.6,375.4 724.4,378.5 723.5,389.9 705.8,386.7" fill="none" stroke="#48cc48" stroke-width="0.4"/>
<polygon points="705.3,392.2 723.0,395.4 722.0,406.5 704.5,403.2" fill="none" stroke="#48cc48" stroke-width="0.4"/>
<line x1="510.7" y1="254.9" x2="519.9" y2="255.9" stroke="#62dc62" stroke-width="0.45" stroke-dasharray="1.5 1.2"/>
<line x1="513.1" y1="319.2" x2="522.0" y2="320.6" stroke="#62dc62" stroke-width="0.45" stroke-dasharray="1.5 1.2"/>
<line x1="529.3" y1="273.6" x2="544.1" y2="275.5" stroke="#62dc62" stroke-width="0.45" stroke-dasharray="1.5 1.2"/>
<line x1="529.8" y1="290.0" x2="544.5" y2="292.0" stroke="#62dc62" stroke-width="0.45" stroke-dasharray="1.5 1.2"/>
<line x1="530.2" y1="306.1" x2="544.8" y2="308.3" stroke="#62dc62" stroke-width="0.45" stroke-dasharray="1.5 1.2"/>
<line x1="531.1" y1="337.5" x2="545.4" y2="339.9" stroke="#62dc62" stroke-width="0.45" stroke-dasharray="1.5 1.2"/>
<line x1="531.9" y1="367.7" x2="546.0" y2="370.4" stroke="#62dc62" stroke-width="0.45" stroke-dasharray="1.5 1.2"/>
<line x1="553.0" y1="259.6" x2="565.7" y2="261.0" stroke="#62dc62" stroke-width="0.45" stroke-dasharray="1.5 1.2"/>
<line x1="553.3" y1="276.6" x2="565.8" y2="278.1" stroke="#62dc62" stroke-width="0.45" stroke-dasharray="1.5 1.2"/>
<line x1="554.4" y1="356.9" x2="566.4" y2="359.0" stroke="#62dc62" stroke-width="0.45" stroke-dasharray="1.5 1.2"/>
<line x1="554.6" y1="372.1" x2="566.5" y2="374.3" stroke="#62dc62" stroke-width="0.45" stroke-dasharray="1.5 1.2"/>
<line x1="575.2" y1="279.3" x2="586.4" y2="280.6" stroke="#62dc62" stroke-width="0.45" stroke-dasharray="1.5 1.2"/>
<line x1="575.3" y1="312.8" x2="586.2" y2="314.3" stroke="#62dc62" stroke-width="0.45" stroke-dasharray="1.5 1.2"/>
<line x1="575.3" y1="329.0" x2="586.1" y2="330.7" stroke="#62dc62" stroke-width="0.45" stroke-dasharray="1.5 1.2"/>
<line x1="575.4" y1="360.7" x2="586.0" y2="362.6" stroke="#62dc62" stroke-width="0.45" stroke-dasharray="1.5 1.2"/>
<line x1="595.9" y1="299.0" x2="608.6" y2="300.7" stroke="#62dc62" stroke-width="0.45" stroke-dasharray="1.5 1.2"/>
<line x1="595.6" y1="332.2" x2="608.0" y2="334.2" stroke="#62dc62" stroke-width="0.45" stroke-dasharray="1.5 1.2"/>
<line x1="595.4" y1="348.4" x2="607.8" y2="350.5" stroke="#62dc62" stroke-width="0.45" stroke-dasharray="1.5 1.2"/>
<line x1="595.1" y1="379.8" x2="607.2" y2="382.1" stroke="#62dc62" stroke-width="0.45" stroke-dasharray="1.5 1.2"/>
<line x1="618.9" y1="284.7" x2="632.4" y2="286.3" stroke="#62dc62" stroke-width="0.45" stroke-dasharray="1.5 1.2"/>
<line x1="643.4" y1="269.6" x2="655.6" y2="271.0" stroke="#62dc62" stroke-width="0.45" stroke-dasharray="1.5 1.2"/>
<line x1="641.5" y1="322.4" x2="653.3" y2="324.2" stroke="#62dc62" stroke-width="0.45" stroke-dasharray="1.5 1.2"/>
<line x1="639.7" y1="372.2" x2="651.2" y2="374.3" stroke="#62dc62" stroke-width="0.45" stroke-dasharray="1.5 1.2"/>
<line x1="639.1" y1="388.2" x2="650.5" y2="390.4" stroke="#62dc62" stroke-width="0.45" stroke-dasharray="1.5 1.2"/>
<line x1="665.5" y1="290.4" x2="677.2" y2="291.8" stroke="#62dc62" stroke-width="0.45" stroke-dasharray="1.5 1.2"/>
<line x1="663.8" y1="325.7" x2="675.3" y2="327.4" stroke="#62dc62" stroke-width="0.45" stroke-dasharray="1.5 1.2"/>
<line x1="662.9" y1="342.8" x2="674.3" y2="344.6" stroke="#62dc62" stroke-width="0.45" stroke-dasharray="1.5 1.2"/>
<line x1="662.1" y1="359.6" x2="673.4" y2="361.6" stroke="#62dc62" stroke-width="0.45" stroke-dasharray="1.5 1.2"/>
<line x1="684.9" y1="346.3" x2="699.8" y2="348.7" stroke="#62dc62" stroke-width="0.45" stroke-dasharray="1.5 1.2"/>
<line x1="716.4" y1="277.7" x2="730.7" y2="279.3" stroke="#62dc62" stroke-width="0.45" stroke-dasharray="1.5 1.2"/>
<line x1="714.9" y1="296.5" x2="729.1" y2="298.2" stroke="#62dc62" stroke-width="0.45" stroke-dasharray="1.5 1.2"/>
<line x1="713.5" y1="314.8" x2="727.5" y2="316.7" stroke="#62dc62" stroke-width="0.45" stroke-dasharray="1.5 1.2"/>
<line x1="710.7" y1="350.4" x2="724.4" y2="352.6" stroke="#62dc62" stroke-width="0.45" stroke-dasharray="1.5 1.2"/>
<line x1="708.1" y1="384.6" x2="721.5" y2="387.0" stroke="#62dc62" stroke-width="0.45" stroke-dasharray="1.5 1.2"/>
<line x1="706.8" y1="401.1" x2="720.1" y2="403.7" stroke="#62dc62" stroke-width="0.45" stroke-dasharray="1.5 1.2"/>
<polygon points="566.8,251.0 574.0,251.8 574.0,264.0 566.9,263.2" fill="#001800"/>
<polygon points="566.9,268.4 574.0,269.2 574.1,281.2 567.0,280.3" fill="#001800"/>
<polygon points="567.0,285.4 574.1,286.3 574.1,298.0 567.1,297.1" fill="#001800"/>
<polygon points="567.1,302.0 574.1,303.0 574.1,314.5 567.2,313.5" fill="#001800"/>
<polygon points="567.2,318.4 574.2,319.4 574.2,330.8 567.3,329.7" fill="#001800"/>
<polygon points="567.4,334.5 574.2,335.6 574.2,346.7 567.4,345.5" fill="#001800"/>
<polygon points="567.5,350.2 574.2,351.4 574.3,362.3 567.5,361.1" fill="#001800"/>
<polygon points="567.6,365.7 574.3,366.9 574.3,377.7 567.6,376.4" fill="#001800"/>
<polygon points="567.6,377.6 574.3,378.9 574.0,396.5 567.3,394.9" fill="#032803"/>
<line x1="505.8" y1="241.0" x2="738.0" y2="264.5" stroke="#0b5a0b" stroke-width="1.40"/>
<line x1="505.9" y1="243.4" x2="737.7" y2="267.2" stroke="#62dc62" stroke-width="0.55"/>
<line x1="506.5" y1="257.7" x2="736.3" y2="283.8" stroke="#0b5a0b" stroke-width="1.40"/>
<line x1="506.6" y1="260.1" x2="736.0" y2="286.5" stroke="#62dc62" stroke-width="0.55"/>
<line x1="507.1" y1="274.1" x2="734.6" y2="302.7" stroke="#0b5a0b" stroke-width="1.40"/>
<line x1="507.2" y1="276.4" x2="734.4" y2="305.3" stroke="#62dc62" stroke-width="0.55"/>
<line x1="507.8" y1="290.3" x2="732.9" y2="321.2" stroke="#0b5a0b" stroke-width="1.40"/>
<line x1="507.9" y1="292.5" x2="732.7" y2="323.7" stroke="#62dc62" stroke-width="0.55"/>
<line x1="508.4" y1="306.1" x2="731.3" y2="339.2" stroke="#0b5a0b" stroke-width="1.40"/>
<line x1="508.5" y1="308.3" x2="731.1" y2="341.7" stroke="#62dc62" stroke-width="0.55"/>
<line x1="509.0" y1="321.6" x2="729.8" y2="357.0" stroke="#0b5a0b" stroke-width="1.40"/>
<line x1="509.1" y1="323.8" x2="729.5" y2="359.4" stroke="#62dc62" stroke-width="0.55"/>
<line x1="509.7" y1="336.9" x2="728.2" y2="374.3" stroke="#0b5a0b" stroke-width="1.40"/>
<line x1="509.7" y1="339.0" x2="728.0" y2="376.7" stroke="#62dc62" stroke-width="0.55"/>
<line x1="510.3" y1="351.9" x2="726.7" y2="391.3" stroke="#0b5a0b" stroke-width="1.40"/>
<line x1="510.3" y1="354.0" x2="726.5" y2="393.7" stroke="#62dc62" stroke-width="0.55"/>
<line x1="510.9" y1="366.6" x2="725.2" y2="408.0" stroke="#0b5a0b" stroke-width="1.40"/>
<line x1="510.9" y1="368.7" x2="725.0" y2="410.3" stroke="#62dc62" stroke-width="0.55"/>
<polygon points="516.2,362.8 528.7,365.2 528.8,369.4 516.4,367.0" fill="#052a05"/>
<polygon points="632.7,384.9 649.9,388.2 649.7,392.6 632.6,389.3" fill="#052a05"/>
<polygon points="693.4,396.4 720.2,401.5 719.8,406.1 693.1,401.0" fill="#052a05"/>
<line x1="510.9" y1="366.6" x2="725.2" y2="408.0" stroke="#1cc21c" stroke-width="1.60"/>
<line x1="493.0" y1="380.0" x2="544.0" y2="392.2" stroke="#1cc21c" stroke-width="2.80"/>
<line x1="589.0" y1="404.1" x2="723.0" y2="435.2" stroke="#1cc21c" stroke-width="2.80"/>
<polygon points="485.0,233.5 740.5,261.9 737.9,265.5 485.8,239.8" fill="#085208"/>
<polygon points="485.0,225.0 639.0,242.1 639.0,252.1 485.0,234.5" fill="#053005"/>
<polygon points="639.0,242.6 740.5,253.4 740.5,262.9 639.0,252.6" fill="#053005"/>
<line x1="485.0" y1="234.0" x2="740.5" y2="262.4" stroke="#62dc62" stroke-width="0.50"/>
<line x1="485.7" y1="237.0" x2="738.2" y2="262.2" stroke="#62dc62" stroke-width="0.5" stroke-dasharray="2 1.5"/>
<line x1="485.0" y1="225.0" x2="740.5" y2="253.4" stroke="#62dc62" stroke-width="0.80"/>
<line x1="639.0" y1="242.1" x2="634.0" y2="410.0" stroke="#62dc62" stroke-width="0.80"/>
<polygon points="740.5,253.4 749.6,215.8 751.0,222.0 729.0,434.0 723.0,433.0" fill="#0aa60a"/>
<line x1="749.6" y1="215.8" x2="729.0" y2="434.0" stroke="#4be04b" stroke-width="1.00"/>
<line x1="740.5" y1="253.4" x2="723.0" y2="433.0" stroke="#3ad83a" stroke-width="0.90"/>
<line x1="745.0" y1="223.0" x2="726.0" y2="433.0" stroke="#62dc62" stroke-width="0.50"/>
<line x1="740.0" y1="263.0" x2="745.0" y2="260.0" stroke="#067006" stroke-width="1.00"/>
<line x1="738.3" y1="282.3" x2="743.3" y2="279.3" stroke="#067006" stroke-width="1.00"/>
<line x1="736.6" y1="301.2" x2="741.6" y2="298.2" stroke="#067006" stroke-width="1.00"/>
<line x1="734.9" y1="319.7" x2="739.9" y2="316.7" stroke="#067006" stroke-width="1.00"/>
<line x1="733.3" y1="337.7" x2="738.3" y2="334.7" stroke="#067006" stroke-width="1.00"/>
<line x1="731.8" y1="355.5" x2="736.8" y2="352.5" stroke="#067006" stroke-width="1.00"/>
<line x1="730.2" y1="372.8" x2="735.2" y2="369.8" stroke="#067006" stroke-width="1.00"/>
<line x1="728.7" y1="389.8" x2="733.7" y2="386.8" stroke="#067006" stroke-width="1.00"/>
<line x1="727.2" y1="406.5" x2="732.2" y2="403.5" stroke="#067006" stroke-width="1.00"/>
<g font-family="Liberation Sans, sans-serif" font-size="6.3" fill="#2a2a2a">
<text x="320.8" y="100.9" textLength="27.2" lengthAdjust="spacingAndGlyphs">PPUM-432</text>
<text x="418" y="384.6" textLength="27" lengthAdjust="spacingAndGlyphs">PPUM-378</text>
</g>
<line x1="321.0" y1="104.6" x2="348.0" y2="104.6" stroke="#333" stroke-width="0.90"/>
<line x1="321.0" y1="104.6" x2="300.0" y2="132.0" stroke="#2a2a2a" stroke-width="0.80"/>
<polygon points="298.4,136 297.6,130.4 302.2,132.6" fill="#222"/>
<line x1="418.0" y1="388.4" x2="445.0" y2="388.4" stroke="#333" stroke-width="0.90"/>
<line x1="418.0" y1="388.4" x2="335.5" y2="254.5" stroke="#2a2a2a" stroke-width="0.75"/>
<polygon points="334,251.8 337.4,255.6 334.3,257.0" fill="#222"/>
</svg>
</body></html>
